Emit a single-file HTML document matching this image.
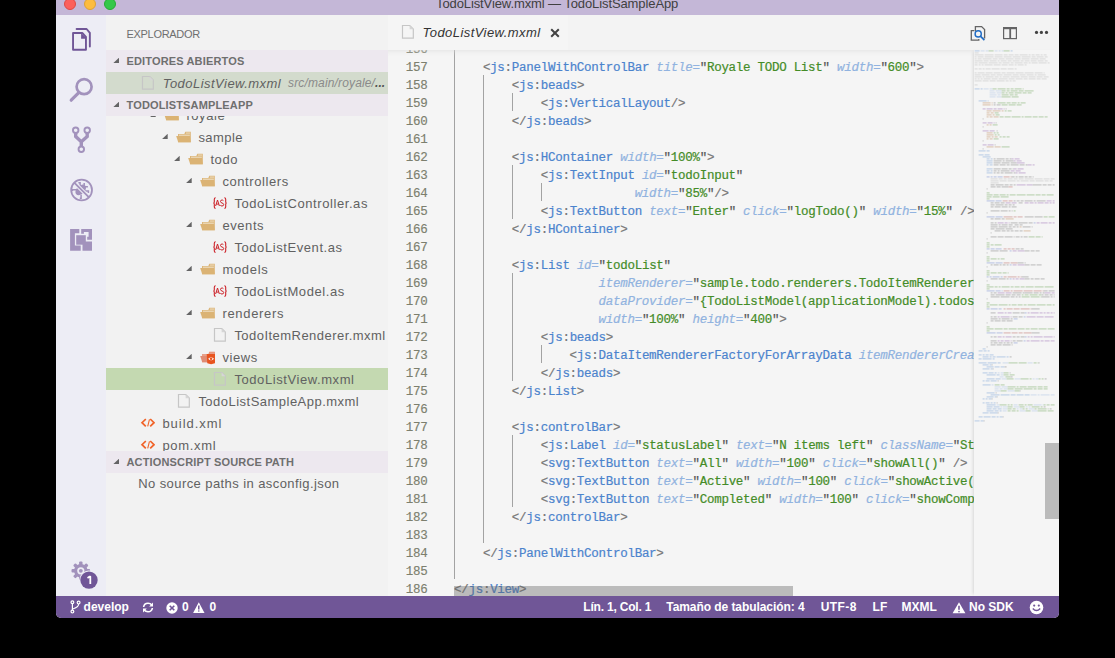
<!DOCTYPE html>
<html><head><meta charset="utf-8">
<style>
*{margin:0;padding:0;box-sizing:border-box}
html,body{width:1115px;height:658px;background:#000;overflow:hidden;font-family:"Liberation Sans",sans-serif}
svg{display:block}
.a{position:absolute}
#win{position:absolute;left:56px;top:0;width:1003px;height:618px;background:#f5f5f5;overflow:hidden;border-radius:0 0 5px 5px}
#title{position:absolute;left:0;top:0;width:1003px;height:15px;background:#c4b7d7;overflow:hidden}
.tl{position:absolute;top:-2px;width:12px;height:12px;border-radius:50%}
#ttext{position:absolute;left:380px;top:-4px;font-size:13px;line-height:16px;color:#404040;white-space:nowrap;letter-spacing:-0.1px}
#act{position:absolute;left:0;top:15px;width:50px;height:581px;background:#ededf5}
#side{position:absolute;left:50px;top:15px;width:282px;height:581px;background:#f2f2f2;overflow:hidden}
#editor{position:absolute;left:332px;top:15px;width:671px;height:581px;background:#f5f5f5;overflow:hidden}
#status{position:absolute;left:0;top:596px;width:1003px;height:22px;background:#705697;color:#fff;font-size:12px;font-weight:bold;line-height:22px;white-space:nowrap}
#status .a{line-height:22px}
.hdr{position:absolute;left:0;width:282px;height:22px;background:#ede8ef;color:#6f6f6f;font-weight:bold;font-size:11px;line-height:22px;letter-spacing:0.15px}
.hdr .tri,.tw{position:absolute;width:5.8px;height:5.5px;background:#646465;clip-path:polygon(100% 0,100% 100%,0 100%)}
.hdr .tri{left:7.4px;top:7.6px}
.hdr span{position:absolute;left:20.5px;top:0}
.row{position:absolute;left:0;width:282px;height:22px;font-size:13px;color:#616161;white-space:nowrap;line-height:22px}
.row.sel{background:#c4d9b1}
.row .tw{top:7.8px}
.row .ic{position:absolute;top:3px}
.row .nm{position:absolute;top:1px;letter-spacing:0.58px}
/* editor */
#tabs{position:absolute;left:0;top:0;width:671px;height:35px;background:#f3f3f3}
#tab{position:absolute;left:0;top:0;width:180px;height:35px;background:#f5f5f5}
#content{position:absolute;left:0;top:35px;width:671px;height:546px;overflow:hidden}
.ln{position:absolute;left:0;width:39.5px;text-align:right;height:18px;line-height:18px;margin-top:2px;-webkit-text-stroke:0.15px currentColor;font-family:"Liberation Mono",monospace;font-size:12.5px;letter-spacing:-0.276px;color:#7c7f6e}
.cl{position:absolute;left:66px;height:18px;line-height:18px;margin-top:2px;-webkit-text-stroke:0.2px currentColor;font-family:"Liberation Mono",monospace;font-size:12.5px;letter-spacing:-0.276px;color:#333;white-space:pre}
.cl i{font-style:normal}
.cl .p{color:#777}
.cl .t{color:#4b83cd}
.cl .a{position:static;color:#91b3e0;font-style:italic}
.cl .q{color:#555}
.cl .s{color:#448c27}
.g{position:absolute;width:1px;background:#a3a3a3}
#shadow{position:absolute;left:0;top:35px;width:671px;height:6px;box-shadow:#dddddd 0 6px 6px -6px inset}
#mini{position:absolute;left:585.7px;top:35px;width:85.3px;height:546px;background:#f5f5f5;box-shadow:-3px 0 3px -2px rgba(0,0,0,0.12)}
</style></head>
<body>
<svg width="0" height="0" style="position:absolute">
 <defs>
  <symbol id="i-folder" viewBox="0 0 16 16">
   <path d="M3,13.2 V5 H9.3 L10.3,2.8 H15.8 V13.2 Z" fill="#dcb67a"/>
   <rect x="4" y="5.7" width="10.8" height="1" fill="#efe2c8"/>
   <rect x="11" y="3.6" width="4" height="0.9" fill="#efe2c8"/>
   <path d="M1.2,7.1 H15 L15.8,13.2 H3.2 Z" fill="#dbb374"/>
  </symbol>
  <symbol id="i-views" viewBox="0 0 16 16">
   <path d="M3,13.2 V5 H9.3 L10.3,2.8 H15.8 V13.2 Z" fill="#e8a08a"/>
   <path d="M1.2,7.1 H15 L15.8,13.2 H3.2 Z" fill="#e08c74"/>
   <rect x="10.5" y="3.3" width="5" height="2" fill="none" stroke="#e8957d" stroke-width="0.8"/>
   <path d="M7.7,5 H16.5 L15.9,14.3 L12.1,15.3 L8.3,14.3 Z" fill="#e8541f"/>
   <path d="M9.2,9.8 Q12.1,6.8 15,9.8 Q12.1,12.8 9.2,9.8 Z" fill="#fff"/>
   <circle cx="12.1" cy="9.8" r="1.3" fill="#e8541f"/>
  </symbol>
  <symbol id="i-as" viewBox="0 0 16 16">
   <g fill="none" stroke="#cc2229" stroke-width="1.1">
    <path d="M4.7,2.8 Q3.3,2.8 3.3,4.2 V6.9 Q3.3,8 2.3,8 Q3.3,8 3.3,9.1 V11.9 Q3.3,13.3 4.7,13.3"/>
    <path d="M13.3,2.8 Q14.7,2.8 14.7,4.2 V6.9 Q14.7,8 15.7,8 Q14.7,8 14.7,9.1 V11.9 Q14.7,13.3 13.3,13.3"/>
    <path d="M4.6,11 L6.5,5 L8.4,11 M5.3,9.1 H7.7" stroke-width="1"/>
    <path d="M12.4,5.6 Q11.9,5 11,5 Q9.5,5 9.5,6.5 Q9.5,7.6 11,8 Q12.7,8.4 12.7,9.6 Q12.7,11 11,11 Q9.9,11 9.3,10.3" stroke-width="1"/>
   </g>
  </symbol>
  <symbol id="i-mxml" viewBox="0 0 16 16">
   <path d="M3.5,1.5 H10.8 L14.3,5 V14.2 H3.5 Z" fill="none" stroke="#c6c6c6" stroke-width="1.2"/>
   <path d="M10.6,1.4 V5.2 H14.4 Z" fill="#d6d6d6"/>
  </symbol>
  <symbol id="i-xml" viewBox="0 0 16 16">
   <g fill="none" stroke="#f0642a" stroke-linecap="square">
    <path d="M6.2,4.6 L3,7.7 L6.2,10.8" stroke-width="1.7"/>
    <path d="M10.5,4.4 L8.7,11.4" stroke-width="1.1" stroke-linecap="butt"/>
    <path d="M11.8,4.6 L15,7.7 L11.8,10.8" stroke-width="1.7"/>
   </g>
  </symbol>
 </defs>
</svg>
<div id="win">
  <div id="title">
    <div class="tl" style="left:8px;background:#fc605c;border:0.5px solid #de4a45"></div>
    <div class="tl" style="left:28px;background:#fdbc40;border:0.5px solid #dea236"></div>
    <div class="tl" style="left:48px;background:#34c84a;border:0.5px solid #27aa35"></div>
    <div id="ttext">TodoListView.mxml — TodoListSampleApp</div>
  </div>
  <div id="act">
   <!-- files -->
   <svg class="a" style="left:10px;top:9px" width="32" height="32" viewBox="0 0 32 32">
    <g fill="none" stroke="#705697" stroke-width="1.9" stroke-linejoin="round">
     <path d="M7.05,8.95 H16.3 L19.95,12.8 V25.8 H7.05 Z"/>
     <path d="M10.6,5 H20.6 L23.85,8.9 V22.6" stroke-linecap="round"/>
    </g>
    <path d="M15.1,8.9 L19.9,13.6 V14.7 H15.1 Z" fill="#705697"/>
   </svg>
   <!-- search -->
   <svg class="a" style="left:10px;top:59px" width="32" height="32" viewBox="0 0 32 32">
    <g fill="none" stroke="#a292bc">
     <circle cx="18.1" cy="12.65" r="7.5" stroke-width="2.7"/>
     <path d="M12.8,18.6 L5.2,26.2" stroke-width="3.2" stroke-linecap="round"/>
    </g>
   </svg>
   <!-- scm -->
   <svg class="a" style="left:10px;top:109px" width="32" height="32" viewBox="0 0 32 32">
    <g fill="none" stroke="#a292bc">
     <circle cx="9.7" cy="6.3" r="2.75" stroke-width="1.9"/>
     <circle cx="21.2" cy="6.3" r="2.75" stroke-width="1.9"/>
     <circle cx="15.3" cy="25.3" r="2.75" stroke-width="1.9"/>
     <path d="M9.7,9 V12.6 L15.3,17.8 V22.5 M21.2,9 V12.6 L15.3,17.8" stroke-width="3.4" stroke-linejoin="miter"/>
    </g>
   </svg>
   <!-- debug -->
   <svg class="a" style="left:10px;top:159px" width="32" height="32" viewBox="0 0 32 32">
    <g fill="none" stroke="#a292bc" stroke-width="1.5" stroke-linecap="butt">
     <path d="M12.4,8.7 H14.1 V12.8 M18.2,9 V12.6 M19,12.8 H21.9 M18.4,17 H22.4 V18.9 M6.4,17 V15.8 H11.4 M15.1,20.8 V24.2 H13.8"/>
    </g>
    <ellipse cx="14.7" cy="15.9" rx="6.3" ry="4.1" transform="rotate(-45 14.7 15.9)" fill="#a292bc"/>
    <path d="M8.8,9.2 L22.4,22.8" stroke="#ededf5" stroke-width="3.8"/>
    <path d="M8.2,8.6 L22.8,23.2" stroke="#a292bc" stroke-width="1.8"/>
    <circle cx="15.6" cy="16" r="10.4" fill="none" stroke="#a292bc" stroke-width="1.8"/>
   </svg>
   <!-- extensions -->
   <svg class="a" style="left:10px;top:209px" width="32" height="32" viewBox="0 0 32 32">
    <g fill="#a292bc">
     <path d="M4.1,4.9 H13.3 V9.2 H8.9 V21.6 H14.7 V26.75 H4.1 Z"/>
     <path d="M15.2,4.9 H26 V15.8 H21.2 V12.7 H22.6 V8 H17.9 V9.7 H15.2 Z"/>
     <rect x="10.2" y="11.2" width="9.6" height="9.5"/>
     <rect x="16.5" y="17.5" width="9.5" height="9.25"/>
    </g>
   </svg>
   <!-- gear + badge -->
   <svg class="a" style="left:10px;top:541px" width="36" height="36" viewBox="0 0 36 36">
    <g transform="translate(14.8,14.8)">
     <g fill="#a292bc">
      <circle r="6.8"/>
      <rect x="-1.7" y="-9.3" width="3.4" height="18.6" rx="1"/>
      <rect x="-1.7" y="-9.3" width="3.4" height="18.6" rx="1" transform="rotate(45)"/>
      <rect x="-1.7" y="-9.3" width="3.4" height="18.6" rx="1" transform="rotate(90)"/>
      <rect x="-1.7" y="-9.3" width="3.4" height="18.6" rx="1" transform="rotate(135)"/>
     </g>
     <circle r="3.6" fill="#ededf5"/>
     <circle r="1.9" fill="#a292bc"/>
    </g>
    <circle cx="23" cy="24.1" r="9.6" fill="#ededf5"/>
    <circle cx="23" cy="24.1" r="8.7" fill="#705697"/>
    <path d="M21.5,22 L23.7,20.6 H24.3 V27.9" fill="none" stroke="#fff" stroke-width="1.8" stroke-linejoin="round"/>
   </svg>
  </div>
  <div id="side">
   <div class="a" style="left:20.5px;top:13px;font-size:11px;line-height:12px;color:#6f6f6f;letter-spacing:-0.3px">EXPLORADOR</div>
   <div class="hdr" style="top:35px"><div class="tri"></div><span>EDITORES ABIERTOS</span></div>
   <div class="row" style="top:57px;background:#d3dbcd">
    <svg class="ic" style="left:33.1px" width="16" height="16"><use href="#i-mxml"/></svg>
    <span class="nm" style="left:56.7px;font-style:italic;letter-spacing:0.47px;color:#616161">TodoListView.mxml</span>
    <span class="a" style="left:182px;top:0;font-size:12px;font-style:italic;color:#8a8a8a;letter-spacing:0.15px;white-space:nowrap">src/main/royale/<b style="color:#555;letter-spacing:0">...</b></span>
   </div>
   <div id="tree" class="a" style="left:0;top:101px;width:282px;height:335px;overflow:hidden">
    <div class="a" style="left:0;top:-101px;width:282px;height:600px">
<div class="row" style="top:89px"><div class="tw" style="left:43.9px"></div><svg class="ic" style="left:57.1px" width="16" height="16"><use href="#i-folder"/></svg><span class="nm" style="left:80.4px">royale</span></div>
<div class="row" style="top:111px"><div class="tw" style="left:55.9px"></div><svg class="ic" style="left:69.1px" width="16" height="16"><use href="#i-folder"/></svg><span class="nm" style="left:92.4px;letter-spacing:0.43px">sample</span></div>
<div class="row" style="top:133px"><div class="tw" style="left:67.9px"></div><svg class="ic" style="left:81.1px" width="16" height="16"><use href="#i-folder"/></svg><span class="nm" style="left:104.4px">todo</span></div>
<div class="row" style="top:155px"><div class="tw" style="left:79.9px"></div><svg class="ic" style="left:93.1px" width="16" height="16"><use href="#i-folder"/></svg><span class="nm" style="left:116.4px">controllers</span></div>
<div class="row" style="top:177px"><svg class="ic" style="left:105.1px" width="16" height="16"><use href="#i-as"/></svg><span class="nm" style="left:128.4px">TodoListController.as</span></div>
<div class="row" style="top:199px"><div class="tw" style="left:79.9px"></div><svg class="ic" style="left:93.1px" width="16" height="16"><use href="#i-folder"/></svg><span class="nm" style="left:116.4px">events</span></div>
<div class="row" style="top:221px"><svg class="ic" style="left:105.1px" width="16" height="16"><use href="#i-as"/></svg><span class="nm" style="left:128.4px">TodoListEvent.as</span></div>
<div class="row" style="top:243px"><div class="tw" style="left:79.9px"></div><svg class="ic" style="left:93.1px" width="16" height="16"><use href="#i-folder"/></svg><span class="nm" style="left:116.4px;letter-spacing:0.71px">models</span></div>
<div class="row" style="top:265px"><svg class="ic" style="left:105.1px" width="16" height="16"><use href="#i-as"/></svg><span class="nm" style="left:128.4px">TodoListModel.as</span></div>
<div class="row" style="top:287px"><div class="tw" style="left:79.9px"></div><svg class="ic" style="left:93.1px" width="16" height="16"><use href="#i-folder"/></svg><span class="nm" style="left:116.4px;letter-spacing:0.68px">renderers</span></div>
<div class="row" style="top:309px"><svg class="ic" style="left:105.1px" width="16" height="16"><use href="#i-mxml"/></svg><span class="nm" style="left:128.4px;letter-spacing:0.46px">TodoItemRenderer.mxml</span></div>
<div class="row" style="top:331px"><div class="tw" style="left:79.9px"></div><svg class="ic" style="left:93.1px" width="16" height="16"><use href="#i-views"/></svg><span class="nm" style="left:116.4px">views</span></div>
<div class="row sel" style="top:353px"><svg class="ic" style="left:105.1px" width="16" height="16"><use href="#i-mxml"/></svg><span class="nm" style="left:128.4px">TodoListView.mxml</span></div>
<div class="row" style="top:375px"><svg class="ic" style="left:69.1px" width="16" height="16"><use href="#i-mxml"/></svg><span class="nm" style="left:92.4px;letter-spacing:0.48px">TodoListSampleApp.mxml</span></div>
<div class="row" style="top:397px"><svg class="ic" style="left:33.1px" width="16" height="16"><use href="#i-xml"/></svg><span class="nm" style="left:56.4px;letter-spacing:0.97px">build.xml</span></div>
<div class="row" style="top:419px"><svg class="ic" style="left:33.1px" width="16" height="16"><use href="#i-xml"/></svg><span class="nm" style="left:56.4px;letter-spacing:0.70px">pom.xml</span></div>
    </div>
   </div>
   <div class="hdr" style="top:79px"><div class="tri"></div><span>TODOLISTSAMPLEAPP</span></div>
   <div class="hdr" style="top:436px"><div class="tri"></div><span>ACTIONSCRIPT SOURCE PATH</span></div>
   <div class="a" style="left:32.2px;top:458px;font-size:13px;line-height:22px;color:#616161;letter-spacing:0.42px;white-space:nowrap">No source paths in asconfig.json</div>
  </div>
  <div id="editor">
   <div id="tabs">
    <div id="tab">
     <svg class="a" style="left:10.5px;top:8.5px" width="16" height="16"><use href="#i-mxml"/></svg>
     <span class="a" style="left:34.6px;top:10px;font-size:13px;line-height:16px;font-style:italic;color:#333;letter-spacing:0.43px;white-space:nowrap">TodoListView.mxml</span>
     <svg class="a" style="left:162px;top:13px" width="10" height="10" viewBox="0 0 10 10"><path d="M1.2,1.2 L8.8,8.8 M8.8,1.2 L1.2,8.8" stroke="#424242" stroke-width="2"/></svg>
    </div>
    <!-- right icons -->
    <svg class="a" style="left:580px;top:8px" width="22" height="22" viewBox="0 0 22 22">
     <g fill="none" stroke="#646465" stroke-width="1.3">
      <path d="M6.3,7.6 H3.3 V17.2 H10.8 V16"/>
      <path d="M7.4,8.2 V3.6 H13.6 L16.6,6.6 V14.8 H15.6"/>
     </g>
     <circle cx="10.2" cy="10.9" r="3.1" fill="#f3f3f3" stroke="#1f6bc4" stroke-width="1.4"/>
     <path d="M12.4,13.1 L16.4,17.1" stroke="#1f6bc4" stroke-width="1.6"/>
    </svg>
    <svg class="a" style="left:614px;top:11px" width="16" height="14" viewBox="0 0 16 14">
     <rect x="1.6" y="1.6" width="12.8" height="11" fill="none" stroke="#646465" stroke-width="1.2"/>
     <rect x="1" y="1" width="14" height="2.2" fill="#646465"/>
     <rect x="7.3" y="1" width="1.8" height="12" fill="#646465"/>
    </svg>
    <svg class="a" style="left:644px;top:10px" width="20" height="14" viewBox="0 0 20 14">
     <g fill="#424242"><circle cx="4.5" cy="7.4" r="1.6"/><circle cx="9.4" cy="7.4" r="1.6"/><circle cx="14.5" cy="7.4" r="1.6"/></g>
    </svg>
   </div>
   <div id="content">
<div class="g" style="left:66px;top:0px;height:529px"></div>
<div class="g" style="left:95px;top:25px;height:468px"></div>
<div class="g" style="left:124px;top:43px;height:18px"></div>
<div class="g" style="left:124px;top:115px;height:54px"></div>
<div class="g" style="left:124px;top:223px;height:108px"></div>
<div class="g" style="left:124px;top:385px;height:72px"></div>
<div class="g" style="left:153px;top:133px;height:18px"></div>
<div class="g" style="left:153px;top:295px;height:18px"></div>
<div class="ln" style="top:-11px">156</div><div class="cl" style="top:-11px"></div>
<div class="ln" style="top:7px">157</div><div class="cl" style="top:7px">    <i class="p">&lt;</i><i class="t">js</i><i class="p">:</i><i class="t">PanelWithControlBar</i> <i class="a">title=</i><i class="q">&quot;</i><i class="s">Royale TODO List</i><i class="q">&quot;</i> <i class="a">width=</i><i class="q">&quot;</i><i class="s">600</i><i class="q">&quot;</i><i class="p">&gt;</i></div>
<div class="ln" style="top:25px">158</div><div class="cl" style="top:25px">        <i class="p">&lt;</i><i class="t">js</i><i class="p">:</i><i class="t">beads</i><i class="p">&gt;</i></div>
<div class="ln" style="top:43px">159</div><div class="cl" style="top:43px">            <i class="p">&lt;</i><i class="t">js</i><i class="p">:</i><i class="t">VerticalLayout</i><i class="p">/&gt;</i></div>
<div class="ln" style="top:61px">160</div><div class="cl" style="top:61px">        <i class="p">&lt;/</i><i class="t">js</i><i class="p">:</i><i class="t">beads</i><i class="p">&gt;</i></div>
<div class="ln" style="top:79px">161</div><div class="cl" style="top:79px"></div>
<div class="ln" style="top:97px">162</div><div class="cl" style="top:97px">        <i class="p">&lt;</i><i class="t">js</i><i class="p">:</i><i class="t">HContainer</i> <i class="a">width=</i><i class="q">&quot;</i><i class="s">100%</i><i class="q">&quot;</i><i class="p">&gt;</i></div>
<div class="ln" style="top:115px">163</div><div class="cl" style="top:115px">            <i class="p">&lt;</i><i class="t">js</i><i class="p">:</i><i class="t">TextInput</i> <i class="a">id=</i><i class="q">&quot;</i><i class="s">todoInput</i><i class="q">&quot;</i></div>
<div class="ln" style="top:133px">164</div><div class="cl" style="top:133px">                         <i class="a">width=</i><i class="q">&quot;</i><i class="s">85%</i><i class="q">&quot;</i><i class="p">/&gt;</i></div>
<div class="ln" style="top:151px">165</div><div class="cl" style="top:151px">            <i class="p">&lt;</i><i class="t">js</i><i class="p">:</i><i class="t">TextButton</i> <i class="a">text=</i><i class="q">&quot;</i><i class="s">Enter</i><i class="q">&quot;</i> <i class="a">click=</i><i class="q">&quot;</i><i class="s">logTodo()</i><i class="q">&quot;</i> <i class="a">width=</i><i class="q">&quot;</i><i class="s">15%</i><i class="q">&quot;</i> <i class="p">/&gt;</i></div>
<div class="ln" style="top:169px">166</div><div class="cl" style="top:169px">        <i class="p">&lt;/</i><i class="t">js</i><i class="p">:</i><i class="t">HContainer</i><i class="p">&gt;</i></div>
<div class="ln" style="top:187px">167</div><div class="cl" style="top:187px"></div>
<div class="ln" style="top:205px">168</div><div class="cl" style="top:205px">        <i class="p">&lt;</i><i class="t">js</i><i class="p">:</i><i class="t">List</i> <i class="a">id=</i><i class="q">&quot;</i><i class="s">todoList</i><i class="q">&quot;</i></div>
<div class="ln" style="top:223px">169</div><div class="cl" style="top:223px">                    <i class="a">itemRenderer=</i><i class="q">&quot;</i><i class="s">sample.todo.renderers.TodoItemRenderer</i><i class="q">&quot;</i></div>
<div class="ln" style="top:241px">170</div><div class="cl" style="top:241px">                    <i class="a">dataProvider=</i><i class="q">&quot;</i><i class="s">{TodoListModel(applicationModel).todos}</i><i class="q">&quot;</i></div>
<div class="ln" style="top:259px">171</div><div class="cl" style="top:259px">                    <i class="a">width=</i><i class="q">&quot;</i><i class="s">100%</i><i class="q">&quot;</i> <i class="a">height=</i><i class="q">&quot;</i><i class="s">400</i><i class="q">&quot;</i><i class="p">&gt;</i></div>
<div class="ln" style="top:277px">172</div><div class="cl" style="top:277px">            <i class="p">&lt;</i><i class="t">js</i><i class="p">:</i><i class="t">beads</i><i class="p">&gt;</i></div>
<div class="ln" style="top:295px">173</div><div class="cl" style="top:295px">                <i class="p">&lt;</i><i class="t">js</i><i class="p">:</i><i class="t">DataItemRendererFactoryForArrayData</i> <i class="a">itemRendererCreationBeads=</i><i class="q">&quot;</i><i class="s">x</i><i class="q">&quot;</i><i class="p">/&gt;</i></div>
<div class="ln" style="top:313px">174</div><div class="cl" style="top:313px">            <i class="p">&lt;/</i><i class="t">js</i><i class="p">:</i><i class="t">beads</i><i class="p">&gt;</i></div>
<div class="ln" style="top:331px">175</div><div class="cl" style="top:331px">        <i class="p">&lt;/</i><i class="t">js</i><i class="p">:</i><i class="t">List</i><i class="p">&gt;</i></div>
<div class="ln" style="top:349px">176</div><div class="cl" style="top:349px"></div>
<div class="ln" style="top:367px">177</div><div class="cl" style="top:367px">        <i class="p">&lt;</i><i class="t">js</i><i class="p">:</i><i class="t">controlBar</i><i class="p">&gt;</i></div>
<div class="ln" style="top:385px">178</div><div class="cl" style="top:385px">            <i class="p">&lt;</i><i class="t">js</i><i class="p">:</i><i class="t">Label</i> <i class="a">id=</i><i class="q">&quot;</i><i class="s">statusLabel</i><i class="q">&quot;</i> <i class="a">text=</i><i class="q">&quot;</i><i class="s">N items left</i><i class="q">&quot;</i> <i class="a">className=</i><i class="q">&quot;</i><i class="s">StatusLabel</i><i class="q">&quot;</i><i class="p">/&gt;</i></div>
<div class="ln" style="top:403px">179</div><div class="cl" style="top:403px">            <i class="p">&lt;</i><i class="t">svg</i><i class="p">:</i><i class="t">TextButton</i> <i class="a">text=</i><i class="q">&quot;</i><i class="s">All</i><i class="q">&quot;</i> <i class="a">width=</i><i class="q">&quot;</i><i class="s">100</i><i class="q">&quot;</i> <i class="a">click=</i><i class="q">&quot;</i><i class="s">showAll()</i><i class="q">&quot;</i> <i class="p">/&gt;</i></div>
<div class="ln" style="top:421px">180</div><div class="cl" style="top:421px">            <i class="p">&lt;</i><i class="t">svg</i><i class="p">:</i><i class="t">TextButton</i> <i class="a">text=</i><i class="q">&quot;</i><i class="s">Active</i><i class="q">&quot;</i> <i class="a">width=</i><i class="q">&quot;</i><i class="s">100</i><i class="q">&quot;</i> <i class="a">click=</i><i class="q">&quot;</i><i class="s">showActive()</i><i class="q">&quot;</i> <i class="p">/&gt;</i></div>
<div class="ln" style="top:439px">181</div><div class="cl" style="top:439px">            <i class="p">&lt;</i><i class="t">svg</i><i class="p">:</i><i class="t">TextButton</i> <i class="a">text=</i><i class="q">&quot;</i><i class="s">Completed</i><i class="q">&quot;</i> <i class="a">width=</i><i class="q">&quot;</i><i class="s">100</i><i class="q">&quot;</i> <i class="a">click=</i><i class="q">&quot;</i><i class="s">showCompleted()</i><i class="q">&quot;</i> <i class="p">/&gt;</i></div>
<div class="ln" style="top:457px">182</div><div class="cl" style="top:457px">        <i class="p">&lt;/</i><i class="t">js</i><i class="p">:</i><i class="t">controlBar</i><i class="p">&gt;</i></div>
<div class="ln" style="top:475px">183</div><div class="cl" style="top:475px"></div>
<div class="ln" style="top:493px">184</div><div class="cl" style="top:493px">    <i class="p">&lt;/</i><i class="t">js</i><i class="p">:</i><i class="t">PanelWithControlBar</i><i class="p">&gt;</i></div>
<div class="ln" style="top:511px">185</div><div class="cl" style="top:511px"></div>
<div class="ln" style="top:529px">186</div><div class="cl" style="top:529px"><i class="p">&lt;/</i><i class="t">js</i><i class="p">:</i><i class="t">View</i><i class="p">&gt;</i></div>
   </div>
   <div id="shadow"></div>
   <div id="mini"><svg width="85" height="420" style="position:absolute;left:0;top:0;opacity:0.3"><rect x="0.6" y="0.3" width="5" height="1.2" fill="#4b83cd"/><rect x="6.6" y="0.3" width="4" height="1.2" fill="#91b3e0"/><rect x="11.6" y="0.3" width="3" height="1.2" fill="#91b3e0"/><rect x="14.6" y="0.3" width="5" height="1.2" fill="#448c27"/><rect x="20.6" y="0.3" width="3" height="1.2" fill="#91b3e0"/><rect x="24.6" y="0.3" width="2" height="1.2" fill="#91b3e0"/><rect x="27.6" y="0.3" width="2" height="1.2" fill="#91b3e0"/><rect x="29.6" y="0.3" width="6" height="1.2" fill="#448c27"/><rect x="36.6" y="0.3" width="2" height="1.2" fill="#4b83cd"/><rect x="0.6" y="2.3" width="4" height="1.2" fill="#aaaaaa"/><rect x="0.6" y="4.3" width="9" height="1.2" fill="#aaaaaa"/><rect x="10.6" y="4.3" width="9" height="1.2" fill="#aaaaaa"/><rect x="20.6" y="4.3" width="8" height="1.2" fill="#aaaaaa"/><rect x="29.6" y="4.3" width="4" height="1.2" fill="#aaaaaa"/><rect x="34.6" y="4.3" width="5" height="1.2" fill="#aaaaaa"/><rect x="40.6" y="4.3" width="4" height="1.2" fill="#aaaaaa"/><rect x="45.6" y="4.3" width="8" height="1.2" fill="#aaaaaa"/><rect x="54.6" y="4.3" width="2" height="1.2" fill="#aaaaaa"/><rect x="57.6" y="4.3" width="3" height="1.2" fill="#aaaaaa"/><rect x="61.6" y="4.3" width="4" height="1.2" fill="#aaaaaa"/><rect x="66.6" y="4.3" width="2" height="1.2" fill="#aaaaaa"/><rect x="69.6" y="4.3" width="3" height="1.2" fill="#aaaaaa"/><rect x="0.6" y="6.3" width="2" height="1.2" fill="#aaaaaa"/><rect x="3.6" y="6.3" width="6" height="1.2" fill="#aaaaaa"/><rect x="10.6" y="6.3" width="9" height="1.2" fill="#aaaaaa"/><rect x="20.6" y="6.3" width="8" height="1.2" fill="#aaaaaa"/><rect x="29.6" y="6.3" width="8" height="1.2" fill="#aaaaaa"/><rect x="38.6" y="6.3" width="8" height="1.2" fill="#aaaaaa"/><rect x="47.6" y="6.3" width="9" height="1.2" fill="#aaaaaa"/><rect x="57.6" y="6.3" width="4" height="1.2" fill="#aaaaaa"/><rect x="62.6" y="6.3" width="7" height="1.2" fill="#aaaaaa"/><rect x="70.6" y="6.3" width="3" height="1.2" fill="#aaaaaa"/><rect x="0.6" y="8.3" width="2" height="1.2" fill="#aaaaaa"/><rect x="3.6" y="8.3" width="4" height="1.2" fill="#aaaaaa"/><rect x="8.6" y="8.3" width="9" height="1.2" fill="#aaaaaa"/><rect x="18.6" y="8.3" width="5" height="1.2" fill="#aaaaaa"/><rect x="24.6" y="8.3" width="6" height="1.2" fill="#aaaaaa"/><rect x="31.6" y="8.3" width="8" height="1.2" fill="#aaaaaa"/><rect x="40.6" y="8.3" width="6" height="1.2" fill="#aaaaaa"/><rect x="47.6" y="8.3" width="8" height="1.2" fill="#aaaaaa"/><rect x="56.6" y="8.3" width="8" height="1.2" fill="#aaaaaa"/><rect x="65.6" y="8.3" width="6" height="1.2" fill="#aaaaaa"/><rect x="0.6" y="10.3" width="8" height="1.2" fill="#aaaaaa"/><rect x="9.6" y="10.3" width="5" height="1.2" fill="#aaaaaa"/><rect x="15.6" y="10.3" width="7" height="1.2" fill="#aaaaaa"/><rect x="23.6" y="10.3" width="2" height="1.2" fill="#aaaaaa"/><rect x="26.6" y="10.3" width="6" height="1.2" fill="#aaaaaa"/><rect x="33.6" y="10.3" width="4" height="1.2" fill="#aaaaaa"/><rect x="38.6" y="10.3" width="7" height="1.2" fill="#aaaaaa"/><rect x="46.6" y="10.3" width="3" height="1.2" fill="#aaaaaa"/><rect x="50.6" y="10.3" width="5" height="1.2" fill="#aaaaaa"/><rect x="56.6" y="10.3" width="6" height="1.2" fill="#aaaaaa"/><rect x="63.6" y="10.3" width="6" height="1.2" fill="#aaaaaa"/><rect x="70.6" y="10.3" width="3" height="1.2" fill="#aaaaaa"/><rect x="0.6" y="12.3" width="3" height="1.2" fill="#aaaaaa"/><rect x="4.6" y="12.3" width="9" height="1.2" fill="#aaaaaa"/><rect x="14.6" y="12.3" width="9" height="1.2" fill="#aaaaaa"/><rect x="24.6" y="12.3" width="3" height="1.2" fill="#aaaaaa"/><rect x="28.6" y="12.3" width="7" height="1.2" fill="#aaaaaa"/><rect x="36.6" y="12.3" width="3" height="1.2" fill="#aaaaaa"/><rect x="40.6" y="12.3" width="8" height="1.2" fill="#aaaaaa"/><rect x="49.6" y="12.3" width="4" height="1.2" fill="#aaaaaa"/><rect x="54.6" y="12.3" width="2" height="1.2" fill="#aaaaaa"/><rect x="57.6" y="12.3" width="6" height="1.2" fill="#aaaaaa"/><rect x="64.6" y="12.3" width="8" height="1.2" fill="#aaaaaa"/><rect x="73.6" y="12.3" width="2" height="1.2" fill="#aaaaaa"/><rect x="0.6" y="14.3" width="3" height="1.2" fill="#aaaaaa"/><rect x="4.6" y="14.3" width="2" height="1.2" fill="#aaaaaa"/><rect x="7.6" y="14.3" width="2" height="1.2" fill="#aaaaaa"/><rect x="10.6" y="14.3" width="8" height="1.2" fill="#aaaaaa"/><rect x="19.6" y="14.3" width="7" height="1.2" fill="#aaaaaa"/><rect x="27.6" y="14.3" width="6" height="1.2" fill="#aaaaaa"/><rect x="34.6" y="14.3" width="5" height="1.2" fill="#aaaaaa"/><rect x="40.6" y="14.3" width="2" height="1.2" fill="#aaaaaa"/><rect x="43.6" y="14.3" width="6" height="1.2" fill="#aaaaaa"/><rect x="50.6" y="14.3" width="2" height="1.2" fill="#aaaaaa"/><rect x="0.6" y="18.3" width="3" height="1.2" fill="#aaaaaa"/><rect x="4.6" y="18.3" width="3" height="1.2" fill="#aaaaaa"/><rect x="8.6" y="18.3" width="2" height="1.2" fill="#aaaaaa"/><rect x="11.6" y="18.3" width="5" height="1.2" fill="#aaaaaa"/><rect x="17.6" y="18.3" width="8" height="1.2" fill="#aaaaaa"/><rect x="26.6" y="18.3" width="6" height="1.2" fill="#aaaaaa"/><rect x="33.6" y="18.3" width="6" height="1.2" fill="#aaaaaa"/><rect x="40.6" y="18.3" width="2" height="1.2" fill="#aaaaaa"/><rect x="0.6" y="22.3" width="2" height="1.2" fill="#aaaaaa"/><rect x="3.6" y="22.3" width="7" height="1.2" fill="#aaaaaa"/><rect x="11.6" y="22.3" width="7" height="1.2" fill="#aaaaaa"/><rect x="19.6" y="22.3" width="7" height="1.2" fill="#aaaaaa"/><rect x="27.6" y="22.3" width="4" height="1.2" fill="#aaaaaa"/><rect x="32.6" y="22.3" width="8" height="1.2" fill="#aaaaaa"/><rect x="41.6" y="22.3" width="8" height="1.2" fill="#aaaaaa"/><rect x="50.6" y="22.3" width="9" height="1.2" fill="#aaaaaa"/><rect x="60.6" y="22.3" width="8" height="1.2" fill="#aaaaaa"/><rect x="69.6" y="22.3" width="1" height="1.2" fill="#aaaaaa"/><rect x="0.6" y="24.3" width="6" height="1.2" fill="#aaaaaa"/><rect x="7.6" y="24.3" width="8" height="1.2" fill="#aaaaaa"/><rect x="16.6" y="24.3" width="5" height="1.2" fill="#aaaaaa"/><rect x="22.6" y="24.3" width="6" height="1.2" fill="#aaaaaa"/><rect x="29.6" y="24.3" width="8" height="1.2" fill="#aaaaaa"/><rect x="38.6" y="24.3" width="6" height="1.2" fill="#aaaaaa"/><rect x="45.6" y="24.3" width="6" height="1.2" fill="#aaaaaa"/><rect x="52.6" y="24.3" width="7" height="1.2" fill="#aaaaaa"/><rect x="60.6" y="24.3" width="2" height="1.2" fill="#aaaaaa"/><rect x="63.6" y="24.3" width="8" height="1.2" fill="#aaaaaa"/><rect x="0.6" y="26.3" width="7" height="1.2" fill="#aaaaaa"/><rect x="8.6" y="26.3" width="2" height="1.2" fill="#aaaaaa"/><rect x="11.6" y="26.3" width="8" height="1.2" fill="#aaaaaa"/><rect x="20.6" y="26.3" width="4" height="1.2" fill="#aaaaaa"/><rect x="25.6" y="26.3" width="2" height="1.2" fill="#aaaaaa"/><rect x="28.6" y="26.3" width="7" height="1.2" fill="#aaaaaa"/><rect x="36.6" y="26.3" width="9" height="1.2" fill="#aaaaaa"/><rect x="46.6" y="26.3" width="7" height="1.2" fill="#aaaaaa"/><rect x="54.6" y="26.3" width="7" height="1.2" fill="#aaaaaa"/><rect x="62.6" y="26.3" width="6" height="1.2" fill="#aaaaaa"/><rect x="69.6" y="26.3" width="5" height="1.2" fill="#aaaaaa"/><rect x="0.6" y="28.3" width="2" height="1.2" fill="#aaaaaa"/><rect x="3.6" y="28.3" width="2" height="1.2" fill="#aaaaaa"/><rect x="6.6" y="28.3" width="2" height="1.2" fill="#aaaaaa"/><rect x="9.6" y="28.3" width="7" height="1.2" fill="#aaaaaa"/><rect x="17.6" y="28.3" width="6" height="1.2" fill="#aaaaaa"/><rect x="24.6" y="28.3" width="9" height="1.2" fill="#aaaaaa"/><rect x="34.6" y="28.3" width="6" height="1.2" fill="#aaaaaa"/><rect x="41.6" y="28.3" width="7" height="1.2" fill="#aaaaaa"/><rect x="49.6" y="28.3" width="4" height="1.2" fill="#aaaaaa"/><rect x="54.6" y="28.3" width="7" height="1.2" fill="#aaaaaa"/><rect x="62.6" y="28.3" width="4" height="1.2" fill="#aaaaaa"/><rect x="67.6" y="28.3" width="5" height="1.2" fill="#aaaaaa"/><rect x="0.6" y="30.3" width="7" height="1.2" fill="#aaaaaa"/><rect x="8.6" y="30.3" width="6" height="1.2" fill="#aaaaaa"/><rect x="15.6" y="30.3" width="6" height="1.2" fill="#aaaaaa"/><rect x="22.6" y="30.3" width="8" height="1.2" fill="#aaaaaa"/><rect x="31.6" y="30.3" width="3" height="1.2" fill="#aaaaaa"/><rect x="35.6" y="30.3" width="2" height="1.2" fill="#aaaaaa"/><rect x="38.6" y="30.3" width="3" height="1.2" fill="#aaaaaa"/><rect x="0.6" y="34.3" width="3" height="1.2" fill="#aaaaaa"/><rect x="0.6" y="38.3" width="5" height="1.2" fill="#4b83cd"/><rect x="6.6" y="38.3" width="2" height="1.2" fill="#4b83cd"/><rect x="9.6" y="38.3" width="5" height="1.2" fill="#91b3e0"/><rect x="15.6" y="38.3" width="3" height="1.2" fill="#91b3e0"/><rect x="18.6" y="38.3" width="4" height="1.2" fill="#448c27"/><rect x="23.6" y="38.3" width="8" height="1.2" fill="#448c27"/><rect x="32.6" y="38.3" width="3" height="1.2" fill="#448c27"/><rect x="36.6" y="38.3" width="3" height="1.2" fill="#448c27"/><rect x="40.6" y="38.3" width="7" height="1.2" fill="#448c27"/><rect x="48.6" y="38.3" width="1" height="1.2" fill="#448c27"/><rect x="15.6" y="40.3" width="5" height="1.2" fill="#91b3e0"/><rect x="21.6" y="40.3" width="6" height="1.2" fill="#91b3e0"/><rect x="27.6" y="40.3" width="4" height="1.2" fill="#448c27"/><rect x="32.6" y="40.3" width="3" height="1.2" fill="#448c27"/><rect x="36.6" y="40.3" width="7" height="1.2" fill="#448c27"/><rect x="44.6" y="40.3" width="5" height="1.2" fill="#448c27"/><rect x="50.6" y="40.3" width="9" height="1.2" fill="#448c27"/><rect x="15.6" y="42.3" width="6" height="1.2" fill="#91b3e0"/><rect x="22.6" y="42.3" width="5" height="1.2" fill="#91b3e0"/><rect x="27.6" y="42.3" width="3" height="1.2" fill="#448c27"/><rect x="31.6" y="42.3" width="2" height="1.2" fill="#448c27"/><rect x="34.6" y="42.3" width="5" height="1.2" fill="#448c27"/><rect x="40.6" y="42.3" width="7" height="1.2" fill="#448c27"/><rect x="48.6" y="42.3" width="4" height="1.2" fill="#448c27"/><rect x="53.6" y="42.3" width="4" height="1.2" fill="#448c27"/><rect x="15.6" y="44.3" width="7" height="1.2" fill="#91b3e0"/><rect x="23.6" y="44.3" width="3" height="1.2" fill="#91b3e0"/><rect x="27.6" y="44.3" width="7" height="1.2" fill="#448c27"/><rect x="35.6" y="44.3" width="4" height="1.2" fill="#448c27"/><rect x="40.6" y="44.3" width="3" height="1.2" fill="#448c27"/><rect x="15.6" y="46.3" width="6" height="1.2" fill="#91b3e0"/><rect x="22.6" y="46.3" width="5" height="1.2" fill="#91b3e0"/><rect x="27.6" y="46.3" width="9" height="1.2" fill="#448c27"/><rect x="37.6" y="46.3" width="7" height="1.2" fill="#448c27"/><rect x="4.6" y="50.3" width="8" height="1.2" fill="#4b83cd"/><rect x="13.6" y="50.3" width="1" height="1.2" fill="#4b83cd"/><rect x="8.6" y="52.3" width="8" height="1.2" fill="#ab6526"/><rect x="17.6" y="52.3" width="1" height="1.2" fill="#ab6526"/><rect x="19.6" y="52.3" width="2" height="1.2" fill="#555555"/><rect x="23.6" y="52.3" width="8" height="1.2" fill="#448c27"/><rect x="32.6" y="52.3" width="4" height="1.2" fill="#448c27"/><rect x="37.6" y="52.3" width="5" height="1.2" fill="#448c27"/><rect x="43.6" y="52.3" width="2" height="1.2" fill="#448c27"/><rect x="46.6" y="52.3" width="5" height="1.2" fill="#448c27"/><rect x="8.6" y="54.3" width="8" height="1.2" fill="#ab6526"/><rect x="17.6" y="54.3" width="1" height="1.2" fill="#ab6526"/><rect x="19.6" y="54.3" width="2" height="1.2" fill="#555555"/><rect x="22.6" y="54.3" width="4" height="1.2" fill="#555555"/><rect x="27.6" y="54.3" width="6" height="1.2" fill="#448c27"/><rect x="34.6" y="54.3" width="7" height="1.2" fill="#448c27"/><rect x="42.6" y="54.3" width="5" height="1.2" fill="#448c27"/><rect x="8.6" y="58.3" width="3" height="1.2" fill="#7a3e9d"/><rect x="12.6" y="58.3" width="6" height="1.2" fill="#7a3e9d"/><rect x="19.6" y="58.3" width="3" height="1.2" fill="#7a3e9d"/><rect x="23.6" y="58.3" width="5" height="1.2" fill="#7a3e9d"/><rect x="29.6" y="58.3" width="1" height="1.2" fill="#7a3e9d"/><rect x="31.6" y="58.3" width="1" height="1.2" fill="#555555"/><rect x="12.6" y="60.3" width="5" height="1.2" fill="#ab6526"/><rect x="18.6" y="60.3" width="8" height="1.2" fill="#ab6526"/><rect x="27.6" y="60.3" width="2" height="1.2" fill="#ab6526"/><rect x="30.6" y="60.3" width="2" height="1.2" fill="#448c27"/><rect x="33.6" y="60.3" width="4" height="1.2" fill="#448c27"/><rect x="12.6" y="62.3" width="3" height="1.2" fill="#ab6526"/><rect x="16.6" y="62.3" width="3" height="1.2" fill="#ab6526"/><rect x="20.6" y="62.3" width="4" height="1.2" fill="#448c27"/><rect x="12.6" y="64.3" width="5" height="1.2" fill="#ab6526"/><rect x="18.6" y="64.3" width="2" height="1.2" fill="#ab6526"/><rect x="21.6" y="64.3" width="4" height="1.2" fill="#448c27"/><rect x="12.6" y="66.3" width="2" height="1.2" fill="#ab6526"/><rect x="15.6" y="66.3" width="3" height="1.2" fill="#ab6526"/><rect x="19.6" y="66.3" width="5" height="1.2" fill="#ab6526"/><rect x="25.6" y="66.3" width="4" height="1.2" fill="#448c27"/><rect x="30.6" y="66.3" width="6" height="1.2" fill="#448c27"/><rect x="37.6" y="66.3" width="9" height="1.2" fill="#448c27"/><rect x="47.6" y="66.3" width="2" height="1.2" fill="#448c27"/><rect x="50.6" y="66.3" width="7" height="1.2" fill="#448c27"/><rect x="58.6" y="66.3" width="5" height="1.2" fill="#448c27"/><rect x="64.6" y="66.3" width="5" height="1.2" fill="#448c27"/><rect x="70.6" y="66.3" width="3" height="1.2" fill="#448c27"/><rect x="8.6" y="68.3" width="1" height="1.2" fill="#555555"/><rect x="8.6" y="72.3" width="4" height="1.2" fill="#7a3e9d"/><rect x="13.6" y="72.3" width="5" height="1.2" fill="#7a3e9d"/><rect x="19.6" y="72.3" width="1" height="1.2" fill="#7a3e9d"/><rect x="21.6" y="72.3" width="1" height="1.2" fill="#555555"/><rect x="12.6" y="74.3" width="2" height="1.2" fill="#ab6526"/><rect x="15.6" y="74.3" width="2" height="1.2" fill="#ab6526"/><rect x="18.6" y="74.3" width="5" height="1.2" fill="#448c27"/><rect x="8.6" y="76.3" width="1" height="1.2" fill="#555555"/><rect x="8.6" y="80.3" width="6" height="1.2" fill="#7a3e9d"/><rect x="15.6" y="80.3" width="5" height="1.2" fill="#7a3e9d"/><rect x="22.6" y="80.3" width="1" height="1.2" fill="#555555"/><rect x="12.6" y="82.3" width="6" height="1.2" fill="#ab6526"/><rect x="19.6" y="82.3" width="2" height="1.2" fill="#448c27"/><rect x="22.6" y="82.3" width="2" height="1.2" fill="#448c27"/><rect x="12.6" y="84.3" width="7" height="1.2" fill="#ab6526"/><rect x="20.6" y="84.3" width="2" height="1.2" fill="#448c27"/><rect x="23.6" y="84.3" width="2" height="1.2" fill="#448c27"/><rect x="12.6" y="86.3" width="4" height="1.2" fill="#ab6526"/><rect x="17.6" y="86.3" width="2" height="1.2" fill="#ab6526"/><rect x="20.6" y="86.3" width="3" height="1.2" fill="#ab6526"/><rect x="25.6" y="86.3" width="2" height="1.2" fill="#448c27"/><rect x="28.6" y="86.3" width="3" height="1.2" fill="#448c27"/><rect x="32.6" y="86.3" width="3" height="1.2" fill="#448c27"/><rect x="12.6" y="88.3" width="2" height="1.2" fill="#ab6526"/><rect x="15.6" y="88.3" width="3" height="1.2" fill="#ab6526"/><rect x="19.6" y="88.3" width="5" height="1.2" fill="#448c27"/><rect x="8.6" y="90.3" width="1" height="1.2" fill="#555555"/><rect x="8.6" y="94.3" width="4" height="1.2" fill="#7a3e9d"/><rect x="13.6" y="94.3" width="6" height="1.2" fill="#7a3e9d"/><rect x="20.6" y="94.3" width="1" height="1.2" fill="#555555"/><rect x="12.6" y="96.3" width="7" height="1.2" fill="#ab6526"/><rect x="20.6" y="96.3" width="6" height="1.2" fill="#ab6526"/><rect x="27.6" y="96.3" width="8" height="1.2" fill="#448c27"/><rect x="8.6" y="98.3" width="1" height="1.2" fill="#555555"/><rect x="4.6" y="100.3" width="7" height="1.2" fill="#4b83cd"/><rect x="12.6" y="100.3" width="3" height="1.2" fill="#4b83cd"/><rect x="4.6" y="104.3" width="5" height="1.2" fill="#4b83cd"/><rect x="10.6" y="104.3" width="5" height="1.2" fill="#4b83cd"/><rect x="8.6" y="106.3" width="8" height="1.2" fill="#4b83cd"/><rect x="12.6" y="108.3" width="3" height="1.2" fill="#4b83cd"/><rect x="16.6" y="108.3" width="2" height="1.2" fill="#4b83cd"/><rect x="19.6" y="108.3" width="2" height="1.2" fill="#555555"/><rect x="22.6" y="108.3" width="8" height="1.2" fill="#555555"/><rect x="31.6" y="108.3" width="3" height="1.2" fill="#555555"/><rect x="35.6" y="108.3" width="2" height="1.2" fill="#555555"/><rect x="37.6" y="108.3" width="2" height="1.2" fill="#7a3e9d"/><rect x="40.6" y="108.3" width="5" height="1.2" fill="#7a3e9d"/><rect x="12.6" y="110.3" width="6" height="1.2" fill="#4b83cd"/><rect x="19.6" y="110.3" width="8" height="1.2" fill="#555555"/><rect x="28.6" y="110.3" width="2" height="1.2" fill="#555555"/><rect x="31.6" y="110.3" width="8" height="1.2" fill="#555555"/><rect x="39.6" y="110.3" width="2" height="1.2" fill="#7a3e9d"/><rect x="42.6" y="110.3" width="5" height="1.2" fill="#7a3e9d"/><rect x="12.6" y="112.3" width="6" height="1.2" fill="#4b83cd"/><rect x="19.6" y="112.3" width="7" height="1.2" fill="#555555"/><rect x="27.6" y="112.3" width="8" height="1.2" fill="#555555"/><rect x="36.6" y="112.3" width="6" height="1.2" fill="#555555"/><rect x="42.6" y="112.3" width="8" height="1.2" fill="#7a3e9d"/><rect x="12.6" y="114.3" width="2" height="1.2" fill="#4b83cd"/><rect x="15.6" y="114.3" width="3" height="1.2" fill="#4b83cd"/><rect x="19.6" y="114.3" width="5" height="1.2" fill="#555555"/><rect x="25.6" y="114.3" width="6" height="1.2" fill="#555555"/><rect x="32.6" y="114.3" width="3" height="1.2" fill="#555555"/><rect x="36.6" y="114.3" width="8" height="1.2" fill="#555555"/><rect x="45.6" y="114.3" width="5" height="1.2" fill="#555555"/><rect x="51.6" y="114.3" width="2" height="1.2" fill="#555555"/><rect x="53.6" y="114.3" width="4" height="1.2" fill="#7a3e9d"/><rect x="58.6" y="114.3" width="2" height="1.2" fill="#7a3e9d"/><rect x="12.6" y="118.3" width="6" height="1.2" fill="#4b83cd"/><rect x="19.6" y="118.3" width="7" height="1.2" fill="#555555"/><rect x="27.6" y="118.3" width="6" height="1.2" fill="#555555"/><rect x="34.6" y="118.3" width="3" height="1.2" fill="#555555"/><rect x="38.6" y="118.3" width="1" height="1.2" fill="#555555"/><rect x="39.6" y="118.3" width="3" height="1.2" fill="#7a3e9d"/><rect x="43.6" y="118.3" width="6" height="1.2" fill="#7a3e9d"/><rect x="12.6" y="120.3" width="3" height="1.2" fill="#4b83cd"/><rect x="16.6" y="120.3" width="2" height="1.2" fill="#4b83cd"/><rect x="19.6" y="120.3" width="3" height="1.2" fill="#555555"/><rect x="23.6" y="120.3" width="2" height="1.2" fill="#555555"/><rect x="26.6" y="120.3" width="9" height="1.2" fill="#555555"/><rect x="36.6" y="120.3" width="4" height="1.2" fill="#7a3e9d"/><rect x="41.6" y="120.3" width="5" height="1.2" fill="#7a3e9d"/><rect x="12.6" y="122.3" width="6" height="1.2" fill="#4b83cd"/><rect x="19.6" y="122.3" width="2" height="1.2" fill="#555555"/><rect x="22.6" y="122.3" width="3" height="1.2" fill="#555555"/><rect x="26.6" y="122.3" width="3" height="1.2" fill="#555555"/><rect x="30.6" y="122.3" width="8" height="1.2" fill="#555555"/><rect x="39.6" y="122.3" width="2" height="1.2" fill="#555555"/><rect x="41.6" y="122.3" width="2" height="1.2" fill="#7a3e9d"/><rect x="44.6" y="122.3" width="7" height="1.2" fill="#7a3e9d"/><rect x="12.6" y="126.3" width="3" height="1.2" fill="#4b69c6"/><rect x="16.6" y="126.3" width="2" height="1.2" fill="#4b69c6"/><rect x="19.6" y="126.3" width="3" height="1.2" fill="#4b69c6"/><rect x="23.6" y="126.3" width="5" height="1.2" fill="#4b69c6"/><rect x="29.6" y="126.3" width="6" height="1.2" fill="#aa3731"/><rect x="36.6" y="126.3" width="1" height="1.2" fill="#aa3731"/><rect x="37.6" y="126.3" width="3" height="1.2" fill="#555555"/><rect x="41.6" y="126.3" width="2" height="1.2" fill="#555555"/><rect x="44.6" y="126.3" width="5" height="1.2" fill="#555555"/><rect x="50.6" y="126.3" width="3" height="1.2" fill="#555555"/><rect x="54.6" y="126.3" width="3" height="1.2" fill="#555555"/><rect x="58.6" y="126.3" width="1" height="1.2" fill="#555555"/><rect x="16.6" y="128.3" width="7" height="1.2" fill="#aaaaaa"/><rect x="24.6" y="128.3" width="4" height="1.2" fill="#aaaaaa"/><rect x="29.6" y="128.3" width="3" height="1.2" fill="#aaaaaa"/><rect x="33.6" y="128.3" width="5" height="1.2" fill="#aaaaaa"/><rect x="39.6" y="128.3" width="4" height="1.2" fill="#aaaaaa"/><rect x="44.6" y="128.3" width="5" height="1.2" fill="#aaaaaa"/><rect x="50.6" y="128.3" width="9" height="1.2" fill="#aaaaaa"/><rect x="60.6" y="128.3" width="8" height="1.2" fill="#aaaaaa"/><rect x="69.6" y="128.3" width="6" height="1.2" fill="#aaaaaa"/><rect x="76.6" y="128.3" width="4" height="1.2" fill="#aaaaaa"/><rect x="16.6" y="130.3" width="8" height="1.2" fill="#aaaaaa"/><rect x="25.6" y="130.3" width="7" height="1.2" fill="#aaaaaa"/><rect x="33.6" y="130.3" width="8" height="1.2" fill="#aaaaaa"/><rect x="42.6" y="130.3" width="3" height="1.2" fill="#aaaaaa"/><rect x="46.6" y="130.3" width="8" height="1.2" fill="#aaaaaa"/><rect x="55.6" y="130.3" width="5" height="1.2" fill="#aaaaaa"/><rect x="61.6" y="130.3" width="8" height="1.2" fill="#aaaaaa"/><rect x="70.6" y="130.3" width="4" height="1.2" fill="#aaaaaa"/><rect x="75.6" y="130.3" width="3" height="1.2" fill="#aaaaaa"/><rect x="16.6" y="132.3" width="8" height="1.2" fill="#aaaaaa"/><rect x="16.6" y="134.3" width="4" height="1.2" fill="#555555"/><rect x="21.6" y="134.3" width="8" height="1.2" fill="#555555"/><rect x="30.6" y="134.3" width="4" height="1.2" fill="#555555"/><rect x="35.6" y="134.3" width="3" height="1.2" fill="#555555"/><rect x="39.6" y="134.3" width="2" height="1.2" fill="#555555"/><rect x="42.6" y="134.3" width="9" height="1.2" fill="#7a3e9d"/><rect x="52.6" y="134.3" width="6" height="1.2" fill="#7a3e9d"/><rect x="58.6" y="134.3" width="9" height="1.2" fill="#555555"/><rect x="68.6" y="134.3" width="4" height="1.2" fill="#555555"/><rect x="73.6" y="134.3" width="4" height="1.2" fill="#555555"/><rect x="78.6" y="134.3" width="2" height="1.2" fill="#555555"/><rect x="16.6" y="136.3" width="5" height="1.2" fill="#555555"/><rect x="22.6" y="136.3" width="4" height="1.2" fill="#555555"/><rect x="27.6" y="136.3" width="7" height="1.2" fill="#555555"/><rect x="34.6" y="136.3" width="4" height="1.2" fill="#aa3731"/><rect x="12.6" y="138.3" width="1" height="1.2" fill="#555555"/><rect x="12.6" y="142.3" width="3" height="1.2" fill="#448c27"/><rect x="12.6" y="144.3" width="6" height="1.2" fill="#448c27"/><rect x="19.6" y="144.3" width="5" height="1.2" fill="#448c27"/><rect x="25.6" y="144.3" width="6" height="1.2" fill="#448c27"/><rect x="32.6" y="144.3" width="2" height="1.2" fill="#448c27"/><rect x="35.6" y="144.3" width="6" height="1.2" fill="#448c27"/><rect x="42.6" y="144.3" width="9" height="1.2" fill="#448c27"/><rect x="52.6" y="144.3" width="8" height="1.2" fill="#448c27"/><rect x="61.6" y="144.3" width="5" height="1.2" fill="#448c27"/><rect x="67.6" y="144.3" width="4" height="1.2" fill="#448c27"/><rect x="72.6" y="144.3" width="7" height="1.2" fill="#448c27"/><rect x="12.6" y="146.3" width="5" height="1.2" fill="#448c27"/><rect x="18.6" y="146.3" width="7" height="1.2" fill="#448c27"/><rect x="26.6" y="146.3" width="8" height="1.2" fill="#448c27"/><rect x="12.6" y="148.3" width="3" height="1.2" fill="#448c27"/><rect x="12.6" y="150.3" width="8" height="1.2" fill="#4b69c6"/><rect x="21.6" y="150.3" width="6" height="1.2" fill="#4b69c6"/><rect x="28.6" y="150.3" width="5" height="1.2" fill="#aa3731"/><rect x="34.6" y="150.3" width="4" height="1.2" fill="#aa3731"/><rect x="39.6" y="150.3" width="2" height="1.2" fill="#555555"/><rect x="42.6" y="150.3" width="3" height="1.2" fill="#555555"/><rect x="46.6" y="150.3" width="3" height="1.2" fill="#555555"/><rect x="50.6" y="150.3" width="8" height="1.2" fill="#555555"/><rect x="59.6" y="150.3" width="2" height="1.2" fill="#555555"/><rect x="62.6" y="150.3" width="9" height="1.2" fill="#555555"/><rect x="72.6" y="150.3" width="5" height="1.2" fill="#7a3e9d"/><rect x="78.6" y="150.3" width="2" height="1.2" fill="#7a3e9d"/><rect x="16.6" y="152.3" width="3" height="1.2" fill="#555555"/><rect x="20.6" y="152.3" width="5" height="1.2" fill="#555555"/><rect x="26.6" y="152.3" width="4" height="1.2" fill="#555555"/><rect x="31.6" y="152.3" width="5" height="1.2" fill="#7a3e9d"/><rect x="37.6" y="152.3" width="5" height="1.2" fill="#7a3e9d"/><rect x="44.6" y="152.3" width="4" height="1.2" fill="#555555"/><rect x="50.6" y="152.3" width="4" height="1.2" fill="#7a3e9d"/><rect x="55.6" y="152.3" width="4" height="1.2" fill="#7a3e9d"/><rect x="60.6" y="152.3" width="2" height="1.2" fill="#7a3e9d"/><rect x="63.6" y="152.3" width="6" height="1.2" fill="#7a3e9d"/><rect x="70.6" y="152.3" width="4" height="1.2" fill="#7a3e9d"/><rect x="75.6" y="152.3" width="2" height="1.2" fill="#7a3e9d"/><rect x="78.6" y="152.3" width="2" height="1.2" fill="#7a3e9d"/><rect x="16.6" y="154.3" width="4" height="1.2" fill="#555555"/><rect x="21.6" y="154.3" width="8" height="1.2" fill="#555555"/><rect x="30.6" y="154.3" width="3" height="1.2" fill="#555555"/><rect x="34.6" y="154.3" width="3" height="1.2" fill="#555555"/><rect x="38.6" y="154.3" width="2" height="1.2" fill="#555555"/><rect x="16.6" y="156.3" width="3" height="1.2" fill="#555555"/><rect x="20.6" y="156.3" width="6" height="1.2" fill="#555555"/><rect x="27.6" y="156.3" width="6" height="1.2" fill="#555555"/><rect x="34.6" y="156.3" width="2" height="1.2" fill="#555555"/><rect x="37.6" y="156.3" width="5" height="1.2" fill="#555555"/><rect x="16.6" y="160.3" width="9" height="1.2" fill="#555555"/><rect x="26.6" y="160.3" width="7" height="1.2" fill="#555555"/><rect x="34.6" y="160.3" width="2" height="1.2" fill="#555555"/><rect x="37.6" y="160.3" width="1" height="1.2" fill="#555555"/><rect x="39.6" y="160.3" width="2" height="1.2" fill="#448c27"/><rect x="12.6" y="162.3" width="1" height="1.2" fill="#555555"/><rect x="12.6" y="166.3" width="8" height="1.2" fill="#4b69c6"/><rect x="21.6" y="166.3" width="7" height="1.2" fill="#4b69c6"/><rect x="29.6" y="166.3" width="9" height="1.2" fill="#aa3731"/><rect x="39.6" y="166.3" width="3" height="1.2" fill="#aa3731"/><rect x="43.6" y="166.3" width="5" height="1.2" fill="#aa3731"/><rect x="50.6" y="166.3" width="9" height="1.2" fill="#555555"/><rect x="60.6" y="166.3" width="8" height="1.2" fill="#555555"/><rect x="69.6" y="166.3" width="4" height="1.2" fill="#448c27"/><rect x="74.6" y="166.3" width="6" height="1.2" fill="#448c27"/><rect x="16.6" y="168.3" width="3" height="1.2" fill="#555555"/><rect x="20.6" y="168.3" width="6" height="1.2" fill="#555555"/><rect x="27.6" y="168.3" width="3" height="1.2" fill="#555555"/><rect x="31.6" y="168.3" width="8" height="1.2" fill="#ab6526"/><rect x="16.6" y="172.3" width="3" height="1.2" fill="#555555"/><rect x="20.6" y="172.3" width="2" height="1.2" fill="#555555"/><rect x="23.6" y="172.3" width="6" height="1.2" fill="#7a3e9d"/><rect x="30.6" y="172.3" width="3" height="1.2" fill="#7a3e9d"/><rect x="34.6" y="172.3" width="1" height="1.2" fill="#7a3e9d"/><rect x="36.6" y="172.3" width="7" height="1.2" fill="#555555"/><rect x="44.6" y="172.3" width="9" height="1.2" fill="#555555"/><rect x="54.6" y="172.3" width="4" height="1.2" fill="#555555"/><rect x="59.6" y="172.3" width="2" height="1.2" fill="#4b69c6"/><rect x="62.6" y="172.3" width="3" height="1.2" fill="#7a3e9d"/><rect x="66.6" y="172.3" width="7" height="1.2" fill="#7a3e9d"/><rect x="74.6" y="172.3" width="3" height="1.2" fill="#7a3e9d"/><rect x="78.6" y="172.3" width="2" height="1.2" fill="#7a3e9d"/><rect x="16.6" y="174.3" width="7" height="1.2" fill="#555555"/><rect x="24.6" y="174.3" width="2" height="1.2" fill="#555555"/><rect x="27.6" y="174.3" width="6" height="1.2" fill="#555555"/><rect x="34.6" y="174.3" width="4" height="1.2" fill="#555555"/><rect x="40.6" y="174.3" width="4" height="1.2" fill="#555555"/><rect x="45.6" y="174.3" width="3" height="1.2" fill="#555555"/><rect x="16.6" y="176.3" width="7" height="1.2" fill="#555555"/><rect x="24.6" y="176.3" width="9" height="1.2" fill="#555555"/><rect x="34.6" y="176.3" width="3" height="1.2" fill="#555555"/><rect x="38.6" y="176.3" width="3" height="1.2" fill="#555555"/><rect x="42.6" y="176.3" width="2" height="1.2" fill="#555555"/><rect x="45.6" y="176.3" width="2" height="1.2" fill="#ab6526"/><rect x="48.6" y="176.3" width="8" height="1.2" fill="#555555"/><rect x="57.6" y="176.3" width="1" height="1.2" fill="#555555"/><rect x="16.6" y="178.3" width="4" height="1.2" fill="#555555"/><rect x="21.6" y="178.3" width="9" height="1.2" fill="#555555"/><rect x="31.6" y="178.3" width="7" height="1.2" fill="#555555"/><rect x="20.6" y="180.3" width="6" height="1.2" fill="#555555"/><rect x="27.6" y="180.3" width="4" height="1.2" fill="#555555"/><rect x="32.6" y="180.3" width="3" height="1.2" fill="#555555"/><rect x="36.6" y="180.3" width="3" height="1.2" fill="#555555"/><rect x="40.6" y="180.3" width="4" height="1.2" fill="#555555"/><rect x="45.6" y="180.3" width="3" height="1.2" fill="#555555"/><rect x="49.6" y="180.3" width="7" height="1.2" fill="#ab6526"/><rect x="16.6" y="182.3" width="1" height="1.2" fill="#555555"/><rect x="16.6" y="186.3" width="6" height="1.2" fill="#555555"/><rect x="23.6" y="186.3" width="6" height="1.2" fill="#555555"/><rect x="30.6" y="186.3" width="8" height="1.2" fill="#555555"/><rect x="39.6" y="186.3" width="1" height="1.2" fill="#555555"/><rect x="41.6" y="186.3" width="4" height="1.2" fill="#555555"/><rect x="46.6" y="186.3" width="2" height="1.2" fill="#555555"/><rect x="49.6" y="186.3" width="4" height="1.2" fill="#555555"/><rect x="54.6" y="186.3" width="6" height="1.2" fill="#448c27"/><rect x="61.6" y="186.3" width="5" height="1.2" fill="#448c27"/><rect x="67.6" y="186.3" width="1" height="1.2" fill="#448c27"/><rect x="12.6" y="188.3" width="1" height="1.2" fill="#555555"/><rect x="12.6" y="192.3" width="3" height="1.2" fill="#448c27"/><rect x="12.6" y="194.3" width="3" height="1.2" fill="#448c27"/><rect x="16.6" y="194.3" width="3" height="1.2" fill="#448c27"/><rect x="20.6" y="194.3" width="7" height="1.2" fill="#448c27"/><rect x="12.6" y="196.3" width="3" height="1.2" fill="#448c27"/><rect x="12.6" y="198.3" width="3" height="1.2" fill="#4b69c6"/><rect x="16.6" y="198.3" width="4" height="1.2" fill="#4b69c6"/><rect x="21.6" y="198.3" width="6" height="1.2" fill="#4b69c6"/><rect x="29.6" y="198.3" width="3" height="1.2" fill="#aa3731"/><rect x="33.6" y="198.3" width="3" height="1.2" fill="#aa3731"/><rect x="37.6" y="198.3" width="3" height="1.2" fill="#aa3731"/><rect x="41.6" y="198.3" width="4" height="1.2" fill="#555555"/><rect x="46.6" y="198.3" width="3" height="1.2" fill="#555555"/><rect x="16.6" y="200.3" width="8" height="1.2" fill="#555555"/><rect x="25.6" y="200.3" width="8" height="1.2" fill="#555555"/><rect x="35.6" y="200.3" width="2" height="1.2" fill="#4b69c6"/><rect x="38.6" y="200.3" width="4" height="1.2" fill="#7a3e9d"/><rect x="43.6" y="200.3" width="7" height="1.2" fill="#7a3e9d"/><rect x="50.6" y="200.3" width="5" height="1.2" fill="#555555"/><rect x="56.6" y="200.3" width="4" height="1.2" fill="#555555"/><rect x="61.6" y="200.3" width="4" height="1.2" fill="#555555"/><rect x="12.6" y="202.3" width="1" height="1.2" fill="#555555"/><rect x="12.6" y="206.3" width="3" height="1.2" fill="#448c27"/><rect x="12.6" y="208.3" width="3" height="1.2" fill="#448c27"/><rect x="16.6" y="208.3" width="6" height="1.2" fill="#448c27"/><rect x="23.6" y="208.3" width="2" height="1.2" fill="#448c27"/><rect x="26.6" y="208.3" width="4" height="1.2" fill="#448c27"/><rect x="12.6" y="210.3" width="3" height="1.2" fill="#448c27"/><rect x="12.6" y="212.3" width="8" height="1.2" fill="#4b69c6"/><rect x="21.6" y="212.3" width="7" height="1.2" fill="#4b69c6"/><rect x="29.6" y="212.3" width="6" height="1.2" fill="#aa3731"/><rect x="36.6" y="212.3" width="7" height="1.2" fill="#aa3731"/><rect x="43.6" y="212.3" width="6" height="1.2" fill="#555555"/><rect x="50.6" y="212.3" width="1" height="1.2" fill="#555555"/><rect x="16.6" y="214.3" width="2" height="1.2" fill="#555555"/><rect x="19.6" y="214.3" width="5" height="1.2" fill="#555555"/><rect x="25.6" y="214.3" width="2" height="1.2" fill="#555555"/><rect x="28.6" y="214.3" width="3" height="1.2" fill="#555555"/><rect x="32.6" y="214.3" width="2" height="1.2" fill="#555555"/><rect x="35.6" y="214.3" width="2" height="1.2" fill="#4b69c6"/><rect x="38.6" y="214.3" width="4" height="1.2" fill="#7a3e9d"/><rect x="43.6" y="214.3" width="7" height="1.2" fill="#7a3e9d"/><rect x="50.6" y="214.3" width="5" height="1.2" fill="#555555"/><rect x="56.6" y="214.3" width="5" height="1.2" fill="#555555"/><rect x="62.6" y="214.3" width="5" height="1.2" fill="#555555"/><rect x="12.6" y="216.3" width="1" height="1.2" fill="#555555"/><rect x="12.6" y="220.3" width="3" height="1.2" fill="#448c27"/><rect x="12.6" y="222.3" width="3" height="1.2" fill="#448c27"/><rect x="16.6" y="222.3" width="6" height="1.2" fill="#448c27"/><rect x="23.6" y="222.3" width="4" height="1.2" fill="#448c27"/><rect x="28.6" y="222.3" width="4" height="1.2" fill="#448c27"/><rect x="33.6" y="222.3" width="1" height="1.2" fill="#448c27"/><rect x="12.6" y="224.3" width="3" height="1.2" fill="#448c27"/><rect x="12.6" y="226.3" width="2" height="1.2" fill="#4b69c6"/><rect x="15.6" y="226.3" width="2" height="1.2" fill="#4b69c6"/><rect x="18.6" y="226.3" width="7" height="1.2" fill="#4b69c6"/><rect x="26.6" y="226.3" width="2" height="1.2" fill="#4b69c6"/><rect x="29.6" y="226.3" width="3" height="1.2" fill="#aa3731"/><rect x="33.6" y="226.3" width="9" height="1.2" fill="#aa3731"/><rect x="43.6" y="226.3" width="2" height="1.2" fill="#aa3731"/><rect x="46.6" y="226.3" width="1" height="1.2" fill="#aa3731"/><rect x="47.6" y="226.3" width="7" height="1.2" fill="#555555"/><rect x="16.6" y="228.3" width="7" height="1.2" fill="#555555"/><rect x="24.6" y="228.3" width="7" height="1.2" fill="#555555"/><rect x="32.6" y="228.3" width="2" height="1.2" fill="#555555"/><rect x="35.6" y="228.3" width="2" height="1.2" fill="#4b69c6"/><rect x="38.6" y="228.3" width="2" height="1.2" fill="#7a3e9d"/><rect x="41.6" y="228.3" width="3" height="1.2" fill="#7a3e9d"/><rect x="45.6" y="228.3" width="5" height="1.2" fill="#7a3e9d"/><rect x="50.6" y="228.3" width="5" height="1.2" fill="#555555"/><rect x="56.6" y="228.3" width="3" height="1.2" fill="#555555"/><rect x="60.6" y="228.3" width="5" height="1.2" fill="#555555"/><rect x="66.6" y="228.3" width="4" height="1.2" fill="#555555"/><rect x="12.6" y="230.3" width="1" height="1.2" fill="#555555"/><rect x="12.6" y="234.3" width="3" height="1.2" fill="#448c27"/><rect x="12.6" y="236.3" width="7" height="1.2" fill="#448c27"/><rect x="20.6" y="236.3" width="3" height="1.2" fill="#448c27"/><rect x="24.6" y="236.3" width="2" height="1.2" fill="#448c27"/><rect x="27.6" y="236.3" width="8" height="1.2" fill="#448c27"/><rect x="36.6" y="236.3" width="3" height="1.2" fill="#448c27"/><rect x="40.6" y="236.3" width="5" height="1.2" fill="#448c27"/><rect x="46.6" y="236.3" width="4" height="1.2" fill="#448c27"/><rect x="51.6" y="236.3" width="8" height="1.2" fill="#448c27"/><rect x="60.6" y="236.3" width="9" height="1.2" fill="#448c27"/><rect x="70.6" y="236.3" width="9" height="1.2" fill="#448c27"/><rect x="12.6" y="238.3" width="3" height="1.2" fill="#448c27"/><rect x="12.6" y="240.3" width="8" height="1.2" fill="#4b69c6"/><rect x="21.6" y="240.3" width="5" height="1.2" fill="#4b69c6"/><rect x="27.6" y="240.3" width="1" height="1.2" fill="#4b69c6"/><rect x="29.6" y="240.3" width="6" height="1.2" fill="#aa3731"/><rect x="36.6" y="240.3" width="2" height="1.2" fill="#aa3731"/><rect x="39.6" y="240.3" width="9" height="1.2" fill="#aa3731"/><rect x="49.6" y="240.3" width="9" height="1.2" fill="#aa3731"/><rect x="59.6" y="240.3" width="8" height="1.2" fill="#aa3731"/><rect x="68.6" y="240.3" width="1" height="1.2" fill="#aa3731"/><rect x="69.6" y="240.3" width="4" height="1.2" fill="#555555"/><rect x="74.6" y="240.3" width="6" height="1.2" fill="#555555"/><rect x="16.6" y="242.3" width="2" height="1.2" fill="#555555"/><rect x="19.6" y="242.3" width="3" height="1.2" fill="#555555"/><rect x="23.6" y="242.3" width="7" height="1.2" fill="#7a3e9d"/><rect x="31.6" y="242.3" width="6" height="1.2" fill="#7a3e9d"/><rect x="38.6" y="242.3" width="9" height="1.2" fill="#555555"/><rect x="48.6" y="242.3" width="2" height="1.2" fill="#555555"/><rect x="50.6" y="242.3" width="8" height="1.2" fill="#555555"/><rect x="59.6" y="242.3" width="5" height="1.2" fill="#555555"/><rect x="65.6" y="242.3" width="2" height="1.2" fill="#555555"/><rect x="68.6" y="242.3" width="2" height="1.2" fill="#555555"/><rect x="70.6" y="242.3" width="6" height="1.2" fill="#7a3e9d"/><rect x="77.6" y="242.3" width="3" height="1.2" fill="#7a3e9d"/><rect x="16.6" y="244.3" width="4" height="1.2" fill="#555555"/><rect x="21.6" y="244.3" width="9" height="1.2" fill="#555555"/><rect x="31.6" y="244.3" width="5" height="1.2" fill="#555555"/><rect x="37.6" y="244.3" width="4" height="1.2" fill="#555555"/><rect x="42.6" y="244.3" width="4" height="1.2" fill="#555555"/><rect x="47.6" y="244.3" width="2" height="1.2" fill="#448c27"/><rect x="50.6" y="244.3" width="4" height="1.2" fill="#448c27"/><rect x="55.6" y="244.3" width="8" height="1.2" fill="#448c27"/><rect x="64.6" y="244.3" width="3" height="1.2" fill="#448c27"/><rect x="67.6" y="244.3" width="2" height="1.2" fill="#555555"/><rect x="70.6" y="244.3" width="4" height="1.2" fill="#555555"/><rect x="75.6" y="244.3" width="3" height="1.2" fill="#555555"/><rect x="79.6" y="244.3" width="1" height="1.2" fill="#555555"/><rect x="16.6" y="246.3" width="9" height="1.2" fill="#555555"/><rect x="26.6" y="246.3" width="9" height="1.2" fill="#555555"/><rect x="36.6" y="246.3" width="4" height="1.2" fill="#555555"/><rect x="41.6" y="246.3" width="2" height="1.2" fill="#555555"/><rect x="44.6" y="246.3" width="2" height="1.2" fill="#555555"/><rect x="47.6" y="246.3" width="8" height="1.2" fill="#448c27"/><rect x="56.6" y="246.3" width="9" height="1.2" fill="#448c27"/><rect x="66.6" y="246.3" width="1" height="1.2" fill="#448c27"/><rect x="67.6" y="246.3" width="8" height="1.2" fill="#555555"/><rect x="76.6" y="246.3" width="2" height="1.2" fill="#555555"/><rect x="79.6" y="246.3" width="1" height="1.2" fill="#555555"/><rect x="12.6" y="248.3" width="1" height="1.2" fill="#555555"/><rect x="12.6" y="252.3" width="3" height="1.2" fill="#448c27"/><rect x="12.6" y="254.3" width="2" height="1.2" fill="#448c27"/><rect x="15.6" y="254.3" width="8" height="1.2" fill="#448c27"/><rect x="24.6" y="254.3" width="9" height="1.2" fill="#448c27"/><rect x="34.6" y="254.3" width="2" height="1.2" fill="#448c27"/><rect x="37.6" y="254.3" width="5" height="1.2" fill="#448c27"/><rect x="43.6" y="254.3" width="5" height="1.2" fill="#448c27"/><rect x="49.6" y="254.3" width="3" height="1.2" fill="#448c27"/><rect x="53.6" y="254.3" width="8" height="1.2" fill="#448c27"/><rect x="62.6" y="254.3" width="9" height="1.2" fill="#448c27"/><rect x="72.6" y="254.3" width="5" height="1.2" fill="#448c27"/><rect x="78.6" y="254.3" width="2" height="1.2" fill="#448c27"/><rect x="12.6" y="256.3" width="3" height="1.2" fill="#448c27"/><rect x="12.6" y="258.3" width="3" height="1.2" fill="#4b69c6"/><rect x="16.6" y="258.3" width="7" height="1.2" fill="#4b69c6"/><rect x="24.6" y="258.3" width="3" height="1.2" fill="#4b69c6"/><rect x="29.6" y="258.3" width="2" height="1.2" fill="#aa3731"/><rect x="32.6" y="258.3" width="6" height="1.2" fill="#aa3731"/><rect x="39.6" y="258.3" width="6" height="1.2" fill="#aa3731"/><rect x="46.6" y="258.3" width="9" height="1.2" fill="#aa3731"/><rect x="56.6" y="258.3" width="1" height="1.2" fill="#aa3731"/><rect x="57.6" y="258.3" width="8" height="1.2" fill="#555555"/><rect x="16.6" y="262.3" width="5" height="1.2" fill="#555555"/><rect x="23.6" y="262.3" width="6" height="1.2" fill="#7a3e9d"/><rect x="30.6" y="262.3" width="2" height="1.2" fill="#7a3e9d"/><rect x="33.6" y="262.3" width="4" height="1.2" fill="#7a3e9d"/><rect x="38.6" y="262.3" width="7" height="1.2" fill="#555555"/><rect x="46.6" y="262.3" width="4" height="1.2" fill="#555555"/><rect x="50.6" y="262.3" width="2" height="1.2" fill="#4b69c6"/><rect x="53.6" y="262.3" width="2" height="1.2" fill="#7a3e9d"/><rect x="56.6" y="262.3" width="8" height="1.2" fill="#7a3e9d"/><rect x="65.6" y="262.3" width="3" height="1.2" fill="#7a3e9d"/><rect x="69.6" y="262.3" width="2" height="1.2" fill="#7a3e9d"/><rect x="72.6" y="262.3" width="3" height="1.2" fill="#7a3e9d"/><rect x="76.6" y="262.3" width="2" height="1.2" fill="#7a3e9d"/><rect x="79.6" y="262.3" width="1" height="1.2" fill="#7a3e9d"/><rect x="16.6" y="266.3" width="2" height="1.2" fill="#555555"/><rect x="19.6" y="266.3" width="3" height="1.2" fill="#555555"/><rect x="23.6" y="266.3" width="2" height="1.2" fill="#7a3e9d"/><rect x="26.6" y="266.3" width="9" height="1.2" fill="#7a3e9d"/><rect x="36.6" y="266.3" width="1" height="1.2" fill="#7a3e9d"/><rect x="38.6" y="266.3" width="5" height="1.2" fill="#555555"/><rect x="44.6" y="266.3" width="4" height="1.2" fill="#555555"/><rect x="49.6" y="266.3" width="2" height="1.2" fill="#4b69c6"/><rect x="52.6" y="266.3" width="9" height="1.2" fill="#7a3e9d"/><rect x="62.6" y="266.3" width="7" height="1.2" fill="#7a3e9d"/><rect x="70.6" y="266.3" width="9" height="1.2" fill="#7a3e9d"/><rect x="16.6" y="268.3" width="7" height="1.2" fill="#555555"/><rect x="24.6" y="268.3" width="2" height="1.2" fill="#555555"/><rect x="27.6" y="268.3" width="8" height="1.2" fill="#555555"/><rect x="36.6" y="268.3" width="2" height="1.2" fill="#555555"/><rect x="39.6" y="268.3" width="4" height="1.2" fill="#4b69c6"/><rect x="16.6" y="270.3" width="3" height="1.2" fill="#555555"/><rect x="20.6" y="270.3" width="6" height="1.2" fill="#555555"/><rect x="27.6" y="270.3" width="4" height="1.2" fill="#555555"/><rect x="32.6" y="270.3" width="6" height="1.2" fill="#555555"/><rect x="12.6" y="272.3" width="1" height="1.2" fill="#555555"/><rect x="12.6" y="276.3" width="3" height="1.2" fill="#448c27"/><rect x="12.6" y="278.3" width="7" height="1.2" fill="#448c27"/><rect x="20.6" y="278.3" width="8" height="1.2" fill="#448c27"/><rect x="29.6" y="278.3" width="4" height="1.2" fill="#448c27"/><rect x="34.6" y="278.3" width="8" height="1.2" fill="#448c27"/><rect x="43.6" y="278.3" width="7" height="1.2" fill="#448c27"/><rect x="51.6" y="278.3" width="4" height="1.2" fill="#448c27"/><rect x="56.6" y="278.3" width="7" height="1.2" fill="#448c27"/><rect x="64.6" y="278.3" width="8" height="1.2" fill="#448c27"/><rect x="73.6" y="278.3" width="7" height="1.2" fill="#448c27"/><rect x="12.6" y="280.3" width="3" height="1.2" fill="#448c27"/><rect x="12.6" y="282.3" width="9" height="1.2" fill="#4b69c6"/><rect x="22.6" y="282.3" width="6" height="1.2" fill="#4b69c6"/><rect x="29.6" y="282.3" width="7" height="1.2" fill="#aa3731"/><rect x="37.6" y="282.3" width="6" height="1.2" fill="#aa3731"/><rect x="44.6" y="282.3" width="4" height="1.2" fill="#aa3731"/><rect x="49.6" y="282.3" width="8" height="1.2" fill="#aa3731"/><rect x="57.6" y="282.3" width="8" height="1.2" fill="#555555"/><rect x="16.6" y="286.3" width="2" height="1.2" fill="#555555"/><rect x="19.6" y="286.3" width="3" height="1.2" fill="#555555"/><rect x="23.6" y="286.3" width="4" height="1.2" fill="#7a3e9d"/><rect x="28.6" y="286.3" width="2" height="1.2" fill="#7a3e9d"/><rect x="31.6" y="286.3" width="6" height="1.2" fill="#7a3e9d"/><rect x="38.6" y="286.3" width="3" height="1.2" fill="#555555"/><rect x="42.6" y="286.3" width="3" height="1.2" fill="#555555"/><rect x="46.6" y="286.3" width="4" height="1.2" fill="#555555"/><rect x="50.6" y="286.3" width="2" height="1.2" fill="#4b69c6"/><rect x="53.6" y="286.3" width="2" height="1.2" fill="#7a3e9d"/><rect x="56.6" y="286.3" width="2" height="1.2" fill="#7a3e9d"/><rect x="59.6" y="286.3" width="9" height="1.2" fill="#7a3e9d"/><rect x="69.6" y="286.3" width="9" height="1.2" fill="#7a3e9d"/><rect x="79.6" y="286.3" width="1" height="1.2" fill="#7a3e9d"/><rect x="16.6" y="290.3" width="6" height="1.2" fill="#555555"/><rect x="23.6" y="290.3" width="2" height="1.2" fill="#7a3e9d"/><rect x="26.6" y="290.3" width="3" height="1.2" fill="#7a3e9d"/><rect x="30.6" y="290.3" width="5" height="1.2" fill="#7a3e9d"/><rect x="36.6" y="290.3" width="1" height="1.2" fill="#7a3e9d"/><rect x="38.6" y="290.3" width="3" height="1.2" fill="#555555"/><rect x="42.6" y="290.3" width="6" height="1.2" fill="#555555"/><rect x="49.6" y="290.3" width="2" height="1.2" fill="#4b69c6"/><rect x="52.6" y="290.3" width="3" height="1.2" fill="#7a3e9d"/><rect x="56.6" y="290.3" width="9" height="1.2" fill="#7a3e9d"/><rect x="66.6" y="290.3" width="3" height="1.2" fill="#7a3e9d"/><rect x="70.6" y="290.3" width="5" height="1.2" fill="#7a3e9d"/><rect x="76.6" y="290.3" width="4" height="1.2" fill="#7a3e9d"/><rect x="16.6" y="292.3" width="2" height="1.2" fill="#555555"/><rect x="19.6" y="292.3" width="4" height="1.2" fill="#555555"/><rect x="24.6" y="292.3" width="4" height="1.2" fill="#555555"/><rect x="29.6" y="292.3" width="2" height="1.2" fill="#555555"/><rect x="32.6" y="292.3" width="3" height="1.2" fill="#555555"/><rect x="36.6" y="292.3" width="2" height="1.2" fill="#555555"/><rect x="39.6" y="292.3" width="4" height="1.2" fill="#4b69c6"/><rect x="16.6" y="294.3" width="5" height="1.2" fill="#555555"/><rect x="22.6" y="294.3" width="5" height="1.2" fill="#555555"/><rect x="28.6" y="294.3" width="8" height="1.2" fill="#555555"/><rect x="37.6" y="294.3" width="1" height="1.2" fill="#555555"/><rect x="12.6" y="296.3" width="1" height="1.2" fill="#555555"/><rect x="8.6" y="298.3" width="3" height="1.2" fill="#4b83cd"/><rect x="4.6" y="300.3" width="4" height="1.2" fill="#4b83cd"/><rect x="9.6" y="300.3" width="3" height="1.2" fill="#4b83cd"/><rect x="13.6" y="300.3" width="2" height="1.2" fill="#4b83cd"/><rect x="4.6" y="304.3" width="3" height="1.2" fill="#4b83cd"/><rect x="8.6" y="304.3" width="2" height="1.2" fill="#4b83cd"/><rect x="11.6" y="304.3" width="3" height="1.2" fill="#4b83cd"/><rect x="15.6" y="304.3" width="4" height="1.2" fill="#4b83cd"/><rect x="8.6" y="306.3" width="6" height="1.2" fill="#4b83cd"/><rect x="15.6" y="306.3" width="2" height="1.2" fill="#4b83cd"/><rect x="18.6" y="306.3" width="3" height="1.2" fill="#4b83cd"/><rect x="22.6" y="306.3" width="9" height="1.2" fill="#4b83cd"/><rect x="32.6" y="306.3" width="2" height="1.2" fill="#4b83cd"/><rect x="35.6" y="306.3" width="2" height="1.2" fill="#555555"/><rect x="4.6" y="308.3" width="3" height="1.2" fill="#4b83cd"/><rect x="8.6" y="308.3" width="9" height="1.2" fill="#4b83cd"/><rect x="18.6" y="308.3" width="2" height="1.2" fill="#4b83cd"/><rect x="4.6" y="312.3" width="8" height="1.2" fill="#4b83cd"/><rect x="13.6" y="312.3" width="9" height="1.2" fill="#4b83cd"/><rect x="23.6" y="312.3" width="3" height="1.2" fill="#4b83cd"/><rect x="28.6" y="312.3" width="6" height="1.2" fill="#91b3e0"/><rect x="34.6" y="312.3" width="9" height="1.2" fill="#448c27"/><rect x="44.6" y="312.3" width="8" height="1.2" fill="#448c27"/><rect x="53.6" y="312.3" width="5" height="1.2" fill="#91b3e0"/><rect x="59.6" y="312.3" width="3" height="1.2" fill="#448c27"/><rect x="63.6" y="312.3" width="1" height="1.2" fill="#448c27"/><rect x="64.6" y="312.3" width="1" height="1.2" fill="#555555"/><rect x="8.6" y="314.3" width="6" height="1.2" fill="#4b83cd"/><rect x="15.6" y="314.3" width="2" height="1.2" fill="#4b83cd"/><rect x="17.6" y="314.3" width="1" height="1.2" fill="#555555"/><rect x="12.6" y="316.3" width="7" height="1.2" fill="#4b83cd"/><rect x="20.6" y="316.3" width="5" height="1.2" fill="#4b83cd"/><rect x="26.6" y="316.3" width="4" height="1.2" fill="#4b83cd"/><rect x="30.6" y="316.3" width="2" height="1.2" fill="#555555"/><rect x="8.6" y="318.3" width="7" height="1.2" fill="#4b83cd"/><rect x="16.6" y="318.3" width="2" height="1.2" fill="#4b83cd"/><rect x="18.6" y="318.3" width="1" height="1.2" fill="#555555"/><rect x="8.6" y="322.3" width="5" height="1.2" fill="#4b83cd"/><rect x="14.6" y="322.3" width="5" height="1.2" fill="#4b83cd"/><rect x="20.6" y="322.3" width="2" height="1.2" fill="#4b83cd"/><rect x="23.6" y="322.3" width="2" height="1.2" fill="#91b3e0"/><rect x="26.6" y="322.3" width="3" height="1.2" fill="#91b3e0"/><rect x="29.6" y="322.3" width="5" height="1.2" fill="#448c27"/><rect x="35.6" y="322.3" width="1" height="1.2" fill="#555555"/><rect x="12.6" y="324.3" width="9" height="1.2" fill="#4b83cd"/><rect x="22.6" y="324.3" width="3" height="1.2" fill="#4b83cd"/><rect x="26.6" y="324.3" width="3" height="1.2" fill="#91b3e0"/><rect x="29.6" y="324.3" width="5" height="1.2" fill="#448c27"/><rect x="35.6" y="324.3" width="5" height="1.2" fill="#448c27"/><rect x="25.6" y="326.3" width="4" height="1.2" fill="#91b3e0"/><rect x="30.6" y="326.3" width="1" height="1.2" fill="#91b3e0"/><rect x="31.6" y="326.3" width="5" height="1.2" fill="#448c27"/><rect x="36.6" y="326.3" width="2" height="1.2" fill="#555555"/><rect x="12.6" y="328.3" width="8" height="1.2" fill="#4b83cd"/><rect x="21.6" y="328.3" width="5" height="1.2" fill="#4b83cd"/><rect x="27.6" y="328.3" width="5" height="1.2" fill="#91b3e0"/><rect x="32.6" y="328.3" width="7" height="1.2" fill="#448c27"/><rect x="40.6" y="328.3" width="6" height="1.2" fill="#91b3e0"/><rect x="46.6" y="328.3" width="8" height="1.2" fill="#448c27"/><rect x="55.6" y="328.3" width="2" height="1.2" fill="#448c27"/><rect x="58.6" y="328.3" width="2" height="1.2" fill="#91b3e0"/><rect x="61.6" y="328.3" width="3" height="1.2" fill="#91b3e0"/><rect x="64.6" y="328.3" width="2" height="1.2" fill="#448c27"/><rect x="67.6" y="328.3" width="2" height="1.2" fill="#448c27"/><rect x="70.6" y="328.3" width="2" height="1.2" fill="#555555"/><rect x="8.6" y="330.3" width="2" height="1.2" fill="#4b83cd"/><rect x="11.6" y="330.3" width="4" height="1.2" fill="#4b83cd"/><rect x="16.6" y="330.3" width="6" height="1.2" fill="#4b83cd"/><rect x="23.6" y="330.3" width="1" height="1.2" fill="#555555"/><rect x="8.6" y="334.3" width="8" height="1.2" fill="#4b83cd"/><rect x="17.6" y="334.3" width="2" height="1.2" fill="#91b3e0"/><rect x="20.6" y="334.3" width="5" height="1.2" fill="#448c27"/><rect x="26.6" y="334.3" width="4" height="1.2" fill="#448c27"/><rect x="20.6" y="336.3" width="6" height="1.2" fill="#91b3e0"/><rect x="27.6" y="336.3" width="6" height="1.2" fill="#91b3e0"/><rect x="33.6" y="336.3" width="8" height="1.2" fill="#448c27"/><rect x="42.6" y="336.3" width="2" height="1.2" fill="#448c27"/><rect x="45.6" y="336.3" width="7" height="1.2" fill="#448c27"/><rect x="53.6" y="336.3" width="9" height="1.2" fill="#448c27"/><rect x="63.6" y="336.3" width="5" height="1.2" fill="#448c27"/><rect x="69.6" y="336.3" width="4" height="1.2" fill="#448c27"/><rect x="20.6" y="338.3" width="4" height="1.2" fill="#91b3e0"/><rect x="25.6" y="338.3" width="3" height="1.2" fill="#91b3e0"/><rect x="29.6" y="338.3" width="4" height="1.2" fill="#91b3e0"/><rect x="33.6" y="338.3" width="6" height="1.2" fill="#448c27"/><rect x="40.6" y="338.3" width="8" height="1.2" fill="#448c27"/><rect x="49.6" y="338.3" width="9" height="1.2" fill="#448c27"/><rect x="59.6" y="338.3" width="3" height="1.2" fill="#448c27"/><rect x="63.6" y="338.3" width="5" height="1.2" fill="#448c27"/><rect x="69.6" y="338.3" width="4" height="1.2" fill="#448c27"/><rect x="20.6" y="340.3" width="6" height="1.2" fill="#91b3e0"/><rect x="26.6" y="340.3" width="6" height="1.2" fill="#448c27"/><rect x="33.6" y="340.3" width="7" height="1.2" fill="#91b3e0"/><rect x="40.6" y="340.3" width="5" height="1.2" fill="#448c27"/><rect x="45.6" y="340.3" width="1" height="1.2" fill="#555555"/><rect x="12.6" y="342.3" width="8" height="1.2" fill="#4b83cd"/><rect x="21.6" y="342.3" width="1" height="1.2" fill="#555555"/><rect x="16.6" y="344.3" width="9" height="1.2" fill="#4b83cd"/><rect x="26.6" y="344.3" width="9" height="1.2" fill="#4b83cd"/><rect x="36.6" y="344.3" width="5" height="1.2" fill="#4b83cd"/><rect x="42.6" y="344.3" width="7" height="1.2" fill="#4b83cd"/><rect x="50.6" y="344.3" width="5" height="1.2" fill="#4b83cd"/><rect x="56.6" y="344.3" width="6" height="1.2" fill="#91b3e0"/><rect x="63.6" y="344.3" width="2" height="1.2" fill="#91b3e0"/><rect x="66.6" y="344.3" width="9" height="1.2" fill="#91b3e0"/><rect x="76.6" y="344.3" width="4" height="1.2" fill="#91b3e0"/><rect x="12.6" y="346.3" width="7" height="1.2" fill="#4b83cd"/><rect x="20.6" y="346.3" width="2" height="1.2" fill="#4b83cd"/><rect x="22.6" y="346.3" width="1" height="1.2" fill="#555555"/><rect x="8.6" y="348.3" width="2" height="1.2" fill="#4b83cd"/><rect x="11.6" y="348.3" width="2" height="1.2" fill="#4b83cd"/><rect x="14.6" y="348.3" width="3" height="1.2" fill="#4b83cd"/><rect x="17.6" y="348.3" width="1" height="1.2" fill="#555555"/><rect x="8.6" y="352.3" width="2" height="1.2" fill="#4b83cd"/><rect x="11.6" y="352.3" width="4" height="1.2" fill="#4b83cd"/><rect x="16.6" y="352.3" width="2" height="1.2" fill="#4b83cd"/><rect x="19.6" y="352.3" width="2" height="1.2" fill="#4b83cd"/><rect x="22.6" y="352.3" width="1" height="1.2" fill="#555555"/><rect x="12.6" y="354.3" width="9" height="1.2" fill="#4b83cd"/><rect x="22.6" y="354.3" width="3" height="1.2" fill="#91b3e0"/><rect x="25.6" y="354.3" width="7" height="1.2" fill="#448c27"/><rect x="33.6" y="354.3" width="2" height="1.2" fill="#448c27"/><rect x="36.6" y="354.3" width="2" height="1.2" fill="#448c27"/><rect x="39.6" y="354.3" width="4" height="1.2" fill="#91b3e0"/><rect x="44.6" y="354.3" width="5" height="1.2" fill="#448c27"/><rect x="50.6" y="354.3" width="2" height="1.2" fill="#448c27"/><rect x="53.6" y="354.3" width="5" height="1.2" fill="#448c27"/><rect x="59.6" y="354.3" width="8" height="1.2" fill="#91b3e0"/><rect x="68.6" y="354.3" width="1" height="1.2" fill="#91b3e0"/><rect x="69.6" y="354.3" width="2" height="1.2" fill="#448c27"/><rect x="72.6" y="354.3" width="3" height="1.2" fill="#448c27"/><rect x="76.6" y="354.3" width="4" height="1.2" fill="#448c27"/><rect x="12.6" y="356.3" width="6" height="1.2" fill="#4b83cd"/><rect x="19.6" y="356.3" width="6" height="1.2" fill="#4b83cd"/><rect x="26.6" y="356.3" width="1" height="1.2" fill="#4b83cd"/><rect x="28.6" y="356.3" width="5" height="1.2" fill="#91b3e0"/><rect x="33.6" y="356.3" width="5" height="1.2" fill="#448c27"/><rect x="39.6" y="356.3" width="6" height="1.2" fill="#91b3e0"/><rect x="45.6" y="356.3" width="5" height="1.2" fill="#448c27"/><rect x="51.6" y="356.3" width="2" height="1.2" fill="#91b3e0"/><rect x="54.6" y="356.3" width="2" height="1.2" fill="#91b3e0"/><rect x="57.6" y="356.3" width="8" height="1.2" fill="#448c27"/><rect x="66.6" y="356.3" width="2" height="1.2" fill="#448c27"/><rect x="69.6" y="356.3" width="2" height="1.2" fill="#555555"/><rect x="12.6" y="358.3" width="5" height="1.2" fill="#4b83cd"/><rect x="18.6" y="358.3" width="4" height="1.2" fill="#4b83cd"/><rect x="23.6" y="358.3" width="4" height="1.2" fill="#4b83cd"/><rect x="28.6" y="358.3" width="5" height="1.2" fill="#91b3e0"/><rect x="33.6" y="358.3" width="4" height="1.2" fill="#448c27"/><rect x="38.6" y="358.3" width="3" height="1.2" fill="#448c27"/><rect x="42.6" y="358.3" width="2" height="1.2" fill="#91b3e0"/><rect x="45.6" y="358.3" width="3" height="1.2" fill="#91b3e0"/><rect x="48.6" y="358.3" width="2" height="1.2" fill="#448c27"/><rect x="51.6" y="358.3" width="2" height="1.2" fill="#448c27"/><rect x="54.6" y="358.3" width="6" height="1.2" fill="#91b3e0"/><rect x="60.6" y="358.3" width="2" height="1.2" fill="#448c27"/><rect x="63.6" y="358.3" width="9" height="1.2" fill="#448c27"/><rect x="73.6" y="358.3" width="1" height="1.2" fill="#448c27"/><rect x="75.6" y="358.3" width="2" height="1.2" fill="#555555"/><rect x="12.6" y="360.3" width="7" height="1.2" fill="#4b83cd"/><rect x="20.6" y="360.3" width="4" height="1.2" fill="#4b83cd"/><rect x="25.6" y="360.3" width="2" height="1.2" fill="#4b83cd"/><rect x="28.6" y="360.3" width="4" height="1.2" fill="#91b3e0"/><rect x="33.6" y="360.3" width="3" height="1.2" fill="#448c27"/><rect x="37.6" y="360.3" width="4" height="1.2" fill="#448c27"/><rect x="42.6" y="360.3" width="2" height="1.2" fill="#448c27"/><rect x="45.6" y="360.3" width="6" height="1.2" fill="#91b3e0"/><rect x="51.6" y="360.3" width="5" height="1.2" fill="#448c27"/><rect x="57.6" y="360.3" width="6" height="1.2" fill="#91b3e0"/><rect x="63.6" y="360.3" width="9" height="1.2" fill="#448c27"/><rect x="73.6" y="360.3" width="6" height="1.2" fill="#448c27"/><rect x="8.6" y="362.3" width="6" height="1.2" fill="#4b83cd"/><rect x="15.6" y="362.3" width="8" height="1.2" fill="#4b83cd"/><rect x="23.6" y="362.3" width="1" height="1.2" fill="#555555"/><rect x="4.6" y="366.3" width="4" height="1.2" fill="#4b83cd"/><rect x="9.6" y="366.3" width="7" height="1.2" fill="#4b83cd"/><rect x="17.6" y="366.3" width="4" height="1.2" fill="#4b83cd"/><rect x="22.6" y="366.3" width="2" height="1.2" fill="#4b83cd"/><rect x="25.6" y="366.3" width="3" height="1.2" fill="#4b83cd"/><rect x="28.6" y="366.3" width="1" height="1.2" fill="#555555"/><rect x="0.6" y="370.3" width="5" height="1.2" fill="#4b83cd"/><rect x="6.6" y="370.3" width="3" height="1.2" fill="#4b83cd"/><rect x="9.6" y="370.3" width="1" height="1.2" fill="#555555"/></svg></div>
   <!-- scrollbars -->
   <div class="a" style="left:657px;top:428px;width:14px;height:75.5px;background:rgba(100,100,100,0.4)"></div>
   <div class="a" style="left:66px;top:571px;width:339px;height:10px;background:rgba(100,100,100,0.4)"></div>
  </div>
  <div id="status">
   <svg class="a" style="left:14px;top:4px" width="11" height="14" viewBox="0 0 11 14">
    <g fill="none" stroke="#fff" stroke-width="1.2">
     <circle cx="2.4" cy="2.2" r="1.4"/><circle cx="8.6" cy="2.6" r="1.4"/><circle cx="2.4" cy="11.6" r="1.4"/>
     <path d="M2.4,3.6 V10.2 M8.6,4 Q8.6,7.4 2.6,9"/>
    </g>
   </svg>
   <span class="a" style="left:27.6px;top:0">develop</span>
   <svg class="a" style="left:86px;top:6px" width="12" height="11" viewBox="0 0 12 11">
    <g fill="none" stroke="#fff" stroke-width="1.6">
     <path d="M1.6,5 Q2.2,1.2 6,1.2 Q8.4,1.2 9.8,3"/>
     <path d="M10.4,6 Q9.8,9.8 6,9.8 Q3.6,9.8 2.2,8"/>
    </g>
    <path d="M11,0.6 V4.4 H7.2 Z" fill="#fff"/><path d="M1,10.4 V6.6 H4.8 Z" fill="#fff"/>
   </svg>
   <svg class="a" style="left:109.4px;top:5px" width="14" height="14" viewBox="0 0 14 14">
    <circle cx="7" cy="7" r="5.7" fill="#fff"/>
    <path d="M4.7,4.7 L9.3,9.3 M9.3,4.7 L4.7,9.3" stroke="#705697" stroke-width="1.6"/>
   </svg>
   <span class="a" style="left:126px;top:0">0</span>
   <svg class="a" style="left:137.3px;top:5.8px" width="12" height="12" viewBox="0 0 12 12">
    <path d="M5.8,0.2 L11.5,10.9 H0.1 Z" fill="#fff"/>
    <path d="M5.8,3.6 V7.4" stroke="#705697" stroke-width="1.5"/><circle cx="5.8" cy="9" r="0.8" fill="#705697"/>
   </svg>
   <span class="a" style="left:153.4px;top:0">0</span>
   <span class="a" style="left:527.3px;top:0;letter-spacing:-0.2px">Lín. 1, Col. 1</span>
   <span class="a" style="left:610.3px;top:0;letter-spacing:-0.07px">Tamaño de tabulación: 4</span>
   <span class="a" style="left:764.8px;top:0;letter-spacing:0.4px">UTF-8</span>
   <span class="a" style="left:816.6px;top:0">LF</span>
   <span class="a" style="left:845.5px;top:0">MXML</span>
   <svg class="a" style="left:896px;top:5.5px" width="14" height="12" viewBox="0 0 14 12">
    <path d="M7,0.3 L13.4,11.3 H0.6 Z" fill="#fff"/>
    <path d="M7,3.8 V7.8" stroke="#705697" stroke-width="1.6"/><circle cx="7" cy="9.6" r="0.85" fill="#705697"/>
   </svg>
   <span class="a" style="left:913px;top:0">No SDK</span>
   <svg class="a" style="left:972.5px;top:3.5px" width="15" height="15" viewBox="0 0 15 15">
    <circle cx="7.5" cy="7.5" r="6.8" fill="#fff"/>
    <circle cx="5.2" cy="5.6" r="1.1" fill="#705697"/><circle cx="9.8" cy="5.6" r="1.1" fill="#705697"/>
    <path d="M3.8,8.4 Q7.5,12.6 11.2,8.4" fill="none" stroke="#705697" stroke-width="1.5"/>
   </svg>
  </div>
</div>
</body></html>
